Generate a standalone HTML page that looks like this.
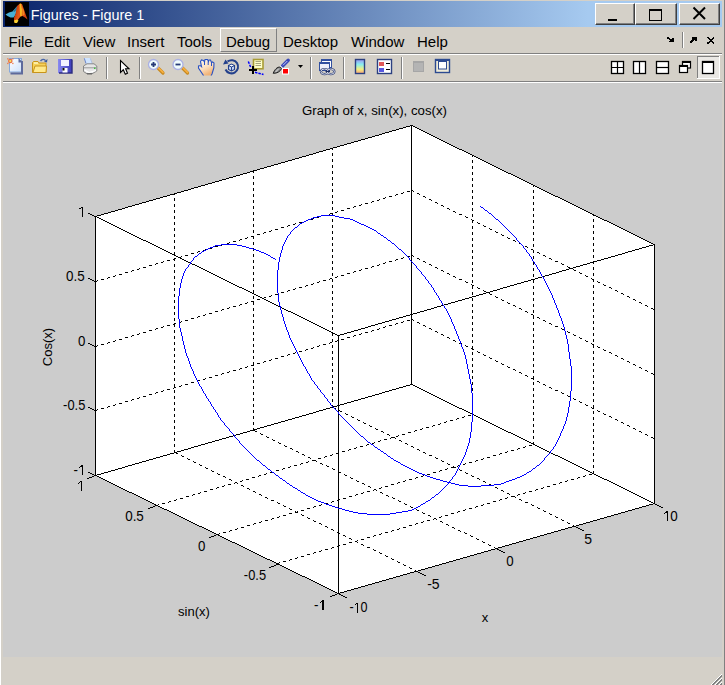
<!DOCTYPE html>
<html><head><meta charset="utf-8">
<style>
*{margin:0;padding:0;box-sizing:border-box}
html,body{width:725px;height:685px;overflow:hidden;background:#D4D0C8;font-family:"Liberation Sans",sans-serif;position:relative}
.abs{position:absolute}
#fl0{left:0;top:0;width:1px;height:685px;background:#FFFFFF}
#fl1{left:1px;top:0;width:1px;height:685px;background:#D4D0C8}
#fr1{left:723px;top:0;width:1px;height:685px;background:#D4D0C8}
#fr2{left:724px;top:0;width:1px;height:685px;background:#808080}
#title{left:3px;top:1px;width:719px;height:26px;background:linear-gradient(to right,#0A246A 0,#A6CAF0 585px,#A6CAF0 100%)}
#ttext{left:30.8px;top:6px;color:#fff;font-size:14.4px;white-space:nowrap;line-height:18px}
.cbtn{top:3px;height:22px;background:#D4D0C8;border-top:1px solid #fff;border-left:1px solid #fff;border-right:1px solid #404040;border-bottom:1px solid #404040;box-shadow:inset -1px -1px 0 #808080}
#menu span{position:absolute;top:33px;font-size:15px;line-height:17px;color:#000;white-space:nowrap}
.sepd{height:1px;background:#808080}
.sepw{height:1px;background:#fff}
.vsep{top:57px;width:2px;height:22px;border-left:1px solid #808080;border-right:1px solid #fff}
#fig{left:3px;top:83px;width:719px;height:574px;background:#CCCCCC}
svg text{font-family:"Liberation Sans",sans-serif;font-size:13px;fill:#000}
svg text.t{font-size:14px}
</style></head><body>
<div class="abs" id="fl0"></div><div class="abs" id="fl1"></div>
<div class="abs" id="fr1"></div><div class="abs" id="fr2"></div>

<div class="abs" id="title"></div>
<div class="abs" style="left:5px;top:2px;width:24px;height:24px;background:#000">
<svg width="24" height="24" viewBox="0 0 24 24">
<defs><linearGradient id="gML" x1="0" y1="0" x2="1" y2="0.3"><stop offset="0" stop-color="#a82808"/><stop offset="0.5" stop-color="#e85a18"/><stop offset="1" stop-color="#d84010"/></linearGradient></defs>
<polygon points="0.5,12.5 4,10.5 7.5,9.5 10.5,6 12.5,4 12.5,8.5 10,13.5 8.5,15.5 5.5,15.5 2.5,14" fill="#48aed6"/><polygon points="8,9 12.5,4 12.5,7 9.5,10" fill="#2a7898"/>
<polygon points="12,4 15,1.5 17,2 19,7.5 20.5,12 22.5,17.5 20,15.5 17.5,14 15.5,14.5 12,19 10.5,21 9,19 9,15.5 10.5,12" fill="url(#gML)"/>
<polygon points="14.5,2 16,1.5 17,8 16.8,14 15.2,14.5 14.8,8" fill="#f6b820"/>
<polygon points="17,5 19,9 19.5,13 17.5,13.5" fill="#f08a20"/>
<polygon points="9,18.5 12,17.5 13.5,18.5 12,21 9.5,21" fill="#f8d030"/>
</svg></div>
<div class="abs" id="ttext">Figures - Figure 1</div>

<div class="abs cbtn" style="left:595px;width:40px"><div class="abs" style="left:12px;top:15px;width:9px;height:2px;background:#000"></div></div>
<div class="abs cbtn" style="left:635px;width:42px"><div class="abs" style="left:13px;top:5px;width:13px;height:12px;border:1px solid #000;border-top:2px solid #000"></div></div>
<div class="abs cbtn" style="left:679px;width:41px">
<svg class="abs" style="left:12px;top:2px" width="15" height="15" viewBox="0 0 15 15"><path d="M1.5,1.5 L13,13 M13,1.5 L1.5,13" stroke="#000" stroke-width="2" fill="none"/></svg></div>

<div id="menu">
<span style="left:8.5px">File</span>
<span style="left:44px">Edit</span>
<span style="left:83px">View</span>
<span style="left:127px">Insert</span>
<span style="left:177px">Tools</span>
<div class="abs" style="left:220px;top:28px;width:57px;height:24px;border-top:1px solid #fff;border-left:1px solid #fff;border-right:1px solid #808080;border-bottom:1px solid #808080"></div>
<span style="left:226px">Debug</span>
<span style="left:283px">Desktop</span>
<span style="left:351px">Window</span>
<span style="left:417px">Help</span>
</div>
<!-- mdi icons right of menu -->
<svg class="abs" style="left:655px;top:28px" width="70" height="27" viewBox="655 28 70 27" shape-rendering="crispEdges">
<path d="M667.5,37.5 L672,41" stroke="#000" stroke-width="1.8" fill="none"/>
<path d="M669,41.3 L674,41.3 M673.2,37.5 L673.2,41.5" stroke="#000" stroke-width="1.6" fill="none"/>
<rect x="682" y="32" width="1" height="16" fill="#808080"/><rect x="683" y="32" width="1" height="16" fill="#fff"/>
<path d="M690.5,42.5 L695,38.5" stroke="#000" stroke-width="1.8" fill="none"/>
<path d="M692,38 L696.5,38 M695.8,37.5 L695.8,41" stroke="#000" stroke-width="1.6" fill="none"/>
<path d="M707.5,37.5 L714.5,43.5 M714.5,37.5 L707.5,43.5" stroke="#000" stroke-width="1.5" fill="none"/>
</svg>

<div class="abs sepd" style="left:3px;top:53px;width:719px"></div>
<div class="abs sepw" style="left:3px;top:54px;width:719px"></div>

<!-- toolbar -->
<svg class="abs" style="left:0;top:0" width="725" height="83" viewBox="0 0 725 83">
<defs>
<linearGradient id="gPage" x1="0" y1="0" x2="1" y2="1"><stop offset="0" stop-color="#ffffff"/><stop offset="1" stop-color="#cfe2fb"/></linearGradient>
<linearGradient id="gFold" x1="0" y1="0" x2="0" y2="1"><stop offset="0" stop-color="#fff2a8"/><stop offset="1" stop-color="#f3c94a"/></linearGradient>
<linearGradient id="gFloppy" x1="0" y1="0" x2="1" y2="0"><stop offset="0" stop-color="#8a8af0"/><stop offset="1" stop-color="#3a3ab8"/></linearGradient>
<linearGradient id="gHand" x1="0" y1="0" x2="0.5" y2="1"><stop offset="0" stop-color="#fffaf0"/><stop offset="0.55" stop-color="#fde2c4"/><stop offset="1" stop-color="#f0b276"/></linearGradient>
<linearGradient id="gCbar" x1="0" y1="0" x2="0" y2="1"><stop offset="0" stop-color="#9c94f4"/><stop offset="0.35" stop-color="#88eef0"/><stop offset="0.7" stop-color="#f4f080"/><stop offset="1" stop-color="#f8a078"/></linearGradient>
<linearGradient id="gPrint" x1="0" y1="0" x2="0" y2="1"><stop offset="0" stop-color="#e8e8e8"/><stop offset="1" stop-color="#909090"/></linearGradient>
</defs>
<!-- new file -->
<rect x="9.5" y="58.5" width="12" height="13.5" fill="url(#gPage)" stroke="#86a8dc" stroke-width="1"/>
<path d="M22,61 L22,73.5 L10.5,73.5" stroke="#5e6a9c" stroke-width="2" fill="none"/>
<polygon points="18.5,58 23,62.5 18.5,62.5" fill="#5e6a9c"/>
<circle cx="10.3" cy="61" r="2.3" fill="#ec7040"/>
<circle cx="10.3" cy="61" r="1.1" fill="#f2ea6a"/>
<rect x="7.2" y="58.2" width="1.3" height="1.3" fill="#ec7848"/><rect x="12.2" y="58.2" width="1.3" height="1.3" fill="#ec7848"/>
<rect x="7.2" y="62.8" width="1.3" height="1.3" fill="#ec7848"/><rect x="12.2" y="62.8" width="1.3" height="1.3" fill="#ec7848"/>
<!-- open folder -->
<path d="M32.5,72.5 L32.5,62.5 L33.5,61.5 L38,61.5 L39,63 L46,63 L46,72.5 Z" fill="#f6d25a" stroke="#c8941a" stroke-width="1"/>
<path d="M33,72.5 L35,66 L46.5,66 L46,72.5 Z" fill="#ffe98a" stroke="#c8941a" stroke-width="1"/>
<path d="M34,63 L38,63" stroke="#fff6c0" stroke-width="1.5"/>
<path d="M40.5,61 Q43,58 45.5,60.5" stroke="#4a68a8" stroke-width="1.4" fill="none"/>
<polygon points="44,61.5 47.5,59 47,62.5" fill="#3c5a9c"/>
<!-- save -->
<rect x="58" y="59" width="14" height="14" fill="url(#gFloppy)"/>
<path d="M72,59.5 L72,73 L59,73" stroke="#2c2c80" stroke-width="1.4" fill="none"/>
<rect x="61" y="60" width="8" height="6" fill="#f4f4ff"/>
<rect x="62.5" y="68" width="5" height="4.5" fill="#ffffff"/>
<rect x="62.5" y="68" width="2" height="2.5" fill="#101010"/>
<!-- print -->
<polygon points="84,58 90.5,58 92.5,64 86,64" fill="#cfe4ff"/>
<path d="M84.3,58.3 L86,63.5" stroke="#6a84c8" stroke-width="1"/>
<path d="M90.3,58.3 L92.2,63.5" stroke="#a8b8d8" stroke-width="0.8"/>
<path d="M83.5,66 L87,63.8 L94,63.8 L96.8,66 L96.8,71 L92,73.8 L87,73.8 L83.5,71.5 Z" fill="#e6e6e6" stroke="#7c7c7c" stroke-width="0.9"/>
<path d="M84,67.8 L96.3,67.8" stroke="#9a9a9a" stroke-width="1"/>
<path d="M84.5,70 L89,72.5 L96,70.5" stroke="#ffffff" stroke-width="1.2" fill="none"/>
<path d="M87,73.8 L92,73.8" stroke="#505050" stroke-width="1"/>
<rect x="94" y="67.5" width="1.5" height="1.5" fill="#40c040"/>
<!-- separators -->
<rect x="106" y="57" width="1" height="22" fill="#808080"/><rect x="107" y="57" width="1" height="22" fill="#fff"/>
<rect x="139" y="57" width="1" height="22" fill="#808080"/><rect x="140" y="57" width="1" height="22" fill="#fff"/>
<rect x="310" y="57" width="1" height="22" fill="#808080"/><rect x="311" y="57" width="1" height="22" fill="#fff"/>
<rect x="343" y="57" width="1" height="22" fill="#808080"/><rect x="344" y="57" width="1" height="22" fill="#fff"/>
<rect x="401" y="57" width="1" height="22" fill="#808080"/><rect x="402" y="57" width="1" height="22" fill="#fff"/>
<!-- arrow -->
<path d="M120.5,60.5 L120.5,72.5 L123.3,69.8 L125.3,74.3 L127.5,73.3 L125.6,68.8 L129,68.8 Z" fill="#fff" stroke="#000" stroke-width="1.1" stroke-linejoin="miter"/>
<!-- zoom in -->
<path d="M158,68 L163,73" stroke="#c88a20" stroke-width="3.2" stroke-linecap="round"/>
<path d="M158.3,67.7 L163,72.4" stroke="#f8b040" stroke-width="1.6" stroke-linecap="round"/>
<circle cx="153.5" cy="64.5" r="5" fill="#f0fcfc" stroke="#aab0e4" stroke-width="1.3"/>
<path d="M151,64.5 L156,64.5 M153.5,62 L153.5,67" stroke="#263a78" stroke-width="1.8"/>
<!-- zoom out -->
<path d="M182.5,68 L187.5,73" stroke="#c88a20" stroke-width="3.2" stroke-linecap="round"/>
<path d="M182.8,67.7 L187.5,72.4" stroke="#f8b040" stroke-width="1.6" stroke-linecap="round"/>
<circle cx="178" cy="64.5" r="5" fill="#f0fcfc" stroke="#aab0e4" stroke-width="1.3"/>
<path d="M175.5,64.5 L180.5,64.5" stroke="#263a78" stroke-width="1.8"/>
<!-- hand -->
<path d="M203.5,75.5 L198.5,68 L198.5,66 L200.5,65.5 L201.5,66.5 L200.5,61.5 L201.5,60 L203.5,60.5 L204.5,62 L205,59.5 L207.5,59.5 L208.5,61.5 L209,60 L210.5,60 L211.5,62.5 L212.5,62 L214,63 L213.8,68 L212,74 L211,75.5 Z" fill="url(#gHand)"/>
<path d="M203.5,75.5 L198.5,68 L198.5,66 L200.5,65.5 L201.5,66.5 L200.5,61.5 L201.5,60 L203.5,60.5 L204.5,62 L205,59.5 L207.5,59.5 L208.5,61.5 L209,60 L210.5,60 L211.5,62.5 L212.5,62 L214,63 L213.8,68 L212,74 L211,75.5" fill="none" stroke="#2a52c4" stroke-width="1.1"/>
<path d="M204.5,62 L204.5,65 M208.2,61.5 L208.2,65 M211.5,62.5 L211.5,66" stroke="#2a52c4" stroke-width="1"/>
<!-- rotate -->
<path d="M225.5,69.5 A6.6,6.6 0 1 0 227.5,61.5" stroke="#24418c" stroke-width="2" fill="none"/>
<polygon points="223,64.5 225.5,59.5 228.5,63.5" fill="#24418c"/>
<polygon points="228.5,65.5 231.5,64 234.5,65.5 234.5,69.5 231.5,71 228.5,69.5" fill="#c4d4f4" stroke="#24418c" stroke-width="1.1"/>
<polygon points="229.5,65.6 231.5,64.8 233.5,65.6 231.5,66.5" fill="#ffffff"/>
<path d="M228.5,65.5 L231.5,67 L234.5,65.5 M231.5,67 L231.5,71" stroke="#24418c" stroke-width="1" fill="none"/>
<!-- data cursor -->
<rect x="253.5" y="59.5" width="9.5" height="9.3" fill="#ffffc8" stroke="#a89c34" stroke-width="1.6"/>
<path d="M255.5,61.5 L261,61.5 M255.5,63.5 L261,63.5 M255.5,65.5 L261,65.5" stroke="#a8a47a" stroke-width="1"/>
<path d="M249,70 L257,70 M253,66 L253,74" stroke="#000" stroke-width="2"/>
<path d="M248.3,61.5 L250.8,67.5" stroke="#0000ff" stroke-width="1.5" stroke-dasharray="2.5,1"/>
<path d="M255,72.3 L263.5,74.5" stroke="#0000ff" stroke-width="1.5" stroke-dasharray="2.5,1"/>
<!-- brush -->
<path d="M282,66.5 L288.2,60.3" stroke="#3a48b8" stroke-width="3.4" stroke-linecap="round"/>
<path d="M283,65.3 L287.3,61" stroke="#d0d8ff" stroke-width="0.9"/>
<path d="M279.8,65.8 L282.6,68.6" stroke="#ffffff" stroke-width="1.6"/>
<path d="M280.3,67 C277,66.8 274.5,69.8 273.2,73.3 C276.6,73.6 280.3,71.6 281.6,68.6 Z" fill="#8a8a8a" stroke="#1e1e1e" stroke-width="1"/>
<path d="M278.8,68.6 L275.6,72" stroke="#e8e8e8" stroke-width="1"/>
<rect x="282" y="68" width="7" height="6.5" fill="#fff"/>
<rect x="283" y="69" width="5" height="4.5" fill="#ff0000"/>
<polygon points="298,65 303,65 300.5,68" fill="#000"/>
<!-- link -->
<rect x="321.5" y="59.5" width="10" height="8" fill="#fff" stroke="#3250a0" stroke-width="1"/>
<rect x="321" y="59" width="11" height="2" fill="#3250a0"/>
<rect x="319.5" y="62.5" width="10" height="8" fill="#eef0fa" stroke="#3250a0" stroke-width="1"/>
<rect x="319" y="62" width="11" height="2" fill="#3250a0"/>
<ellipse cx="324.5" cy="71.6" rx="3.6" ry="2.6" fill="none" stroke="#2a3a70" stroke-width="2.2"/>
<ellipse cx="330.8" cy="71.6" rx="3.6" ry="2.6" fill="none" stroke="#2a3a70" stroke-width="2.2"/>
<ellipse cx="324.5" cy="71.6" rx="3.6" ry="2.6" fill="none" stroke="#eef0f8" stroke-width="0.9"/>
<ellipse cx="330.8" cy="71.6" rx="3.6" ry="2.6" fill="none" stroke="#eef0f8" stroke-width="0.9"/>
<path d="M325.5,71.4 L330,71.4" stroke="#1e2c60" stroke-width="1.3"/>
<!-- colorbar -->
<rect x="355.5" y="59.5" width="9" height="14" fill="url(#gCbar)" stroke="#2c4080" stroke-width="1.4"/>
<!-- legend -->
<rect x="377.5" y="59.5" width="14" height="14" fill="#fff" stroke="#2c4080" stroke-width="1.4"/>
<rect x="379" y="62" width="5" height="4" fill="#e05858"/>
<rect x="379" y="68" width="5" height="4" fill="#5858e0"/>
<path d="M386,63.5 L390,63.5 M386,69.5 L390,69.5" stroke="#000" stroke-width="1.2"/>
<!-- hide plot tools -->
<rect x="413" y="61" width="11" height="11" fill="#a6a6a6"/>
<rect x="414" y="63" width="9" height="8" fill="#b4b4b4"/>
<!-- show plot tools -->
<rect x="435.5" y="59.5" width="14" height="13" fill="#f0ecd8" stroke="#2c4a90" stroke-width="1.4"/>
<rect x="435" y="59" width="15" height="2" fill="#2c4a90"/>
<rect x="438.5" y="61.5" width="8" height="7.5" fill="#fff" stroke="#2c4a90" stroke-width="1"/>
<!-- layout buttons -->
<rect x="611.5" y="61.5" width="12" height="12" fill="#fff" stroke="#000" stroke-width="1.3"/>
<path d="M617.5,61.5 L617.5,73.5 M611.5,67.5 L623.5,67.5" stroke="#000" stroke-width="1.2"/>
<rect x="633.5" y="61.5" width="12" height="12" fill="#fff" stroke="#000" stroke-width="1.3"/>
<path d="M639.5,61.5 L639.5,73.5" stroke="#000" stroke-width="1.2"/>
<rect x="656.5" y="61.5" width="12" height="12" fill="#fff" stroke="#000" stroke-width="1.3"/>
<path d="M656.5,67.5 L668.5,67.5" stroke="#000" stroke-width="1.2"/>
<rect x="682.5" y="61.5" width="8" height="6.5" fill="#fff" stroke="#000" stroke-width="1.2"/>
<rect x="682" y="61" width="9" height="2" fill="#000"/>
<rect x="679.5" y="65.5" width="8" height="7" fill="#fff" stroke="#000" stroke-width="1.2"/>
<rect x="679" y="65" width="9" height="2" fill="#000"/>
<!-- pressed button -->
<rect x="697" y="56" width="23" height="23" fill="#eae8e4"/>
<rect x="697" y="56" width="23" height="1" fill="#808080"/><rect x="697" y="56" width="1" height="23" fill="#808080"/>
<rect x="697" y="78" width="23" height="1" fill="#fff"/><rect x="719" y="56" width="1" height="23" fill="#fff"/>
<rect x="702.5" y="61.5" width="11" height="12" fill="#fff" stroke="#000" stroke-width="1.3"/>
<rect x="702" y="61" width="12" height="2" fill="#000"/>
</svg>


<div class="abs sepd" style="left:3px;top:81px;width:719px"></div>
<div class="abs sepw" style="left:3px;top:82px;width:719px"></div>

<div class="abs" id="fig"></div>
<svg class="abs" style="left:0;top:0" width="725" height="685" shape-rendering="crispEdges">
<polygon points="95.50,216.40 411.50,125.65 654.50,244.40 654.50,503.15 338.50,593.90 95.50,475.15" fill="#fff"/>
<path d="M332 148h1v1h-1zM332 149h1v1h-1zM332 153h1v1h-1zM332 154h1v1h-1zM332 155h1v1h-1zM472 155h1v1h-1zM472 156h1v1h-1zM332 159h1v1h-1zM332 160h1v1h-1zM472 160h1v1h-1zM332 161h1v1h-1zM472 161h1v1h-1zM472 162h1v1h-1zM332 165h1v1h-1zM332 166h1v1h-1zM472 166h1v1h-1zM332 167h1v1h-1zM472 167h1v1h-1zM472 168h1v1h-1zM253 171h1v1h-1zM332 171h1v1h-1zM253 172h1v1h-1zM332 172h1v1h-1zM472 172h1v1h-1zM332 173h1v1h-1zM472 173h1v1h-1zM472 174h1v1h-1zM253 176h1v1h-1zM253 177h1v1h-1zM332 177h1v1h-1zM253 178h1v1h-1zM332 178h1v1h-1zM472 178h1v1h-1zM332 179h1v1h-1zM472 179h1v1h-1zM472 180h1v1h-1zM253 182h1v1h-1zM253 183h1v1h-1zM332 183h1v1h-1zM253 184h1v1h-1zM332 184h1v1h-1zM472 184h1v1h-1zM332 185h1v1h-1zM472 185h1v1h-1zM533 185h1v1h-1zM472 186h1v1h-1zM533 186h1v1h-1zM253 188h1v1h-1zM253 189h1v1h-1zM332 189h1v1h-1zM253 190h1v1h-1zM332 190h1v1h-1zM411 190h2v1h-2zM472 190h1v1h-1zM533 190h1v1h-1zM332 191h1v1h-1zM407 191h3v1h-3zM413 191h1v1h-1zM472 191h1v1h-1zM533 191h1v1h-1zM403 192h1v1h-1zM472 192h1v1h-1zM533 192h1v1h-1zM174 193h1v1h-1zM401 193h2v1h-2zM417 193h2v1h-2zM174 194h1v1h-1zM253 194h1v1h-1zM396 194h2v1h-2zM419 194h1v1h-1zM253 195h1v1h-1zM332 195h1v1h-1zM395 195h1v1h-1zM253 196h1v1h-1zM332 196h1v1h-1zM389 196h3v1h-3zM423 196h2v1h-2zM472 196h1v1h-1zM533 196h1v1h-1zM332 197h1v1h-1zM385 197h1v1h-1zM425 197h1v1h-1zM472 197h1v1h-1zM533 197h1v1h-1zM174 198h1v1h-1zM383 198h2v1h-2zM472 198h1v1h-1zM533 198h1v1h-1zM174 199h1v1h-1zM379 199h1v1h-1zM429 199h2v1h-2zM174 200h1v1h-1zM253 200h1v1h-1zM377 200h2v1h-2zM431 200h1v1h-1zM253 201h1v1h-1zM332 201h1v1h-1zM372 201h2v1h-2zM253 202h1v1h-1zM332 202h1v1h-1zM371 202h1v1h-1zM435 202h2v1h-2zM472 202h1v1h-1zM533 202h1v1h-1zM332 203h1v1h-1zM365 203h3v1h-3zM437 203h1v1h-1zM472 203h1v1h-1zM533 203h1v1h-1zM174 204h1v1h-1zM361 204h1v1h-1zM472 204h1v1h-1zM533 204h1v1h-1zM174 205h1v1h-1zM359 205h2v1h-2zM441 205h2v1h-2zM174 206h1v1h-1zM253 206h1v1h-1zM354 206h2v1h-2zM443 206h1v1h-1zM253 207h1v1h-1zM332 207h1v1h-1zM353 207h1v1h-1zM253 208h1v1h-1zM332 208h1v1h-1zM347 208h3v1h-3zM447 208h2v1h-2zM472 208h1v1h-1zM533 208h1v1h-1zM332 209h1v1h-1zM449 209h1v1h-1zM472 209h1v1h-1zM533 209h1v1h-1zM174 210h1v1h-1zM341 210h3v1h-3zM472 210h1v1h-1zM533 210h1v1h-1zM174 211h1v1h-1zM337 211h1v1h-1zM453 211h2v1h-2zM174 212h1v1h-1zM253 212h1v1h-1zM335 212h2v1h-2zM455 212h1v1h-1zM253 213h1v1h-1zM330 213h3v1h-3zM253 214h1v1h-1zM329 214h1v1h-1zM332 214h1v1h-1zM459 214h3v1h-3zM472 214h1v1h-1zM533 214h1v1h-1zM593 214h1v1h-1zM323 215h3v1h-3zM332 215h1v1h-1zM472 215h1v1h-1zM533 215h1v1h-1zM593 215h1v1h-1zM174 216h1v1h-1zM319 216h1v1h-1zM465 216h1v1h-1zM472 216h1v1h-1zM533 216h1v1h-1zM174 217h1v1h-1zM317 217h2v1h-2zM466 217h2v1h-2zM174 218h1v1h-1zM253 218h1v1h-1zM313 218h1v1h-1zM253 219h1v1h-1zM311 219h2v1h-2zM332 219h1v1h-1zM471 219h1v1h-1zM593 219h1v1h-1zM253 220h1v1h-1zM306 220h2v1h-2zM332 220h1v1h-1zM472 220h2v1h-2zM533 220h1v1h-1zM593 220h1v1h-1zM305 221h1v1h-1zM332 221h1v1h-1zM472 221h1v1h-1zM533 221h1v1h-1zM593 221h1v1h-1zM174 222h1v1h-1zM299 222h3v1h-3zM472 222h1v1h-1zM477 222h1v1h-1zM533 222h1v1h-1zM174 223h1v1h-1zM295 223h1v1h-1zM478 223h2v1h-2zM174 224h1v1h-1zM253 224h1v1h-1zM293 224h2v1h-2zM253 225h1v1h-1zM288 225h2v1h-2zM332 225h1v1h-1zM483 225h1v1h-1zM593 225h1v1h-1zM253 226h1v1h-1zM287 226h1v1h-1zM332 226h1v1h-1zM472 226h1v1h-1zM484 226h2v1h-2zM533 226h1v1h-1zM593 226h1v1h-1zM281 227h3v1h-3zM332 227h1v1h-1zM472 227h1v1h-1zM533 227h1v1h-1zM593 227h1v1h-1zM174 228h1v1h-1zM472 228h1v1h-1zM489 228h1v1h-1zM533 228h1v1h-1zM174 229h1v1h-1zM275 229h3v1h-3zM490 229h2v1h-2zM174 230h1v1h-1zM253 230h1v1h-1zM271 230h1v1h-1zM253 231h1v1h-1zM269 231h2v1h-2zM332 231h1v1h-1zM495 231h1v1h-1zM593 231h1v1h-1zM253 232h1v1h-1zM264 232h2v1h-2zM332 232h1v1h-1zM472 232h1v1h-1zM496 232h2v1h-2zM533 232h1v1h-1zM593 232h1v1h-1zM263 233h1v1h-1zM332 233h1v1h-1zM472 233h1v1h-1zM533 233h1v1h-1zM593 233h1v1h-1zM174 234h1v1h-1zM257 234h3v1h-3zM472 234h1v1h-1zM501 234h1v1h-1zM533 234h1v1h-1zM174 235h1v1h-1zM502 235h2v1h-2zM174 236h1v1h-1zM251 236h3v1h-3zM247 237h1v1h-1zM253 237h1v1h-1zM332 237h1v1h-1zM507 237h1v1h-1zM593 237h1v1h-1zM245 238h2v1h-2zM253 238h1v1h-1zM332 238h1v1h-1zM472 238h1v1h-1zM508 238h2v1h-2zM533 238h1v1h-1zM593 238h1v1h-1zM240 239h2v1h-2zM332 239h1v1h-1zM472 239h1v1h-1zM533 239h1v1h-1zM593 239h1v1h-1zM174 240h1v1h-1zM239 240h1v1h-1zM472 240h1v1h-1zM513 240h2v1h-2zM533 240h1v1h-1zM174 241h1v1h-1zM233 241h3v1h-3zM515 241h1v1h-1zM174 242h1v1h-1zM229 242h1v1h-1zM253 242h1v1h-1zM227 243h2v1h-2zM253 243h1v1h-1zM332 243h1v1h-1zM519 243h2v1h-2zM593 243h1v1h-1zM222 244h2v1h-2zM253 244h1v1h-1zM332 244h1v1h-1zM472 244h1v1h-1zM521 244h1v1h-1zM533 244h1v1h-1zM593 244h1v1h-1zM221 245h1v1h-1zM332 245h1v1h-1zM472 245h1v1h-1zM533 245h1v1h-1zM593 245h1v1h-1zM174 246h1v1h-1zM215 246h3v1h-3zM472 246h1v1h-1zM525 246h2v1h-2zM533 246h1v1h-1zM174 247h1v1h-1zM527 247h1v1h-1zM174 248h1v1h-1zM209 248h3v1h-3zM253 248h1v1h-1zM205 249h1v1h-1zM253 249h1v1h-1zM332 249h1v1h-1zM531 249h2v1h-2zM593 249h1v1h-1zM203 250h2v1h-2zM253 250h1v1h-1zM332 250h1v1h-1zM472 250h1v1h-1zM533 250h1v1h-1zM593 250h1v1h-1zM198 251h2v1h-2zM332 251h1v1h-1zM472 251h1v1h-1zM533 251h1v1h-1zM593 251h1v1h-1zM174 252h1v1h-1zM197 252h1v1h-1zM472 252h1v1h-1zM533 252h1v1h-1zM537 252h2v1h-2zM174 253h1v1h-1zM191 253h3v1h-3zM539 253h1v1h-1zM174 254h1v1h-1zM253 254h1v1h-1zM185 255h3v1h-3zM253 255h1v1h-1zM332 255h1v1h-1zM411 255h2v1h-2zM543 255h2v1h-2zM593 255h1v1h-1zM181 256h1v1h-1zM253 256h1v1h-1zM332 256h1v1h-1zM407 256h3v1h-3zM413 256h1v1h-1zM472 256h1v1h-1zM533 256h1v1h-1zM545 256h1v1h-1zM593 256h1v1h-1zM179 257h2v1h-2zM332 257h1v1h-1zM403 257h1v1h-1zM472 257h1v1h-1zM533 257h1v1h-1zM593 257h1v1h-1zM174 258h2v1h-2zM401 258h2v1h-2zM417 258h2v1h-2zM472 258h1v1h-1zM533 258h1v1h-1zM549 258h2v1h-2zM173 259h2v1h-2zM396 259h2v1h-2zM419 259h1v1h-1zM551 259h1v1h-1zM167 260h3v1h-3zM174 260h1v1h-1zM253 260h1v1h-1zM395 260h1v1h-1zM163 261h1v1h-1zM253 261h1v1h-1zM332 261h1v1h-1zM389 261h3v1h-3zM423 261h2v1h-2zM555 261h3v1h-3zM593 261h1v1h-1zM161 262h2v1h-2zM253 262h1v1h-1zM332 262h1v1h-1zM385 262h1v1h-1zM425 262h1v1h-1zM472 262h1v1h-1zM533 262h1v1h-1zM593 262h1v1h-1zM156 263h2v1h-2zM332 263h1v1h-1zM383 263h2v1h-2zM472 263h1v1h-1zM533 263h1v1h-1zM561 263h1v1h-1zM593 263h1v1h-1zM155 264h1v1h-1zM174 264h1v1h-1zM379 264h1v1h-1zM429 264h2v1h-2zM472 264h1v1h-1zM533 264h1v1h-1zM562 264h2v1h-2zM149 265h3v1h-3zM174 265h1v1h-1zM377 265h2v1h-2zM431 265h1v1h-1zM174 266h1v1h-1zM253 266h1v1h-1zM372 266h2v1h-2zM567 266h1v1h-1zM143 267h3v1h-3zM253 267h1v1h-1zM332 267h1v1h-1zM371 267h1v1h-1zM435 267h2v1h-2zM568 267h2v1h-2zM593 267h1v1h-1zM139 268h1v1h-1zM253 268h1v1h-1zM332 268h1v1h-1zM365 268h3v1h-3zM437 268h1v1h-1zM472 268h1v1h-1zM533 268h1v1h-1zM593 268h1v1h-1zM137 269h2v1h-2zM332 269h1v1h-1zM361 269h1v1h-1zM472 269h1v1h-1zM533 269h1v1h-1zM573 269h1v1h-1zM593 269h1v1h-1zM132 270h2v1h-2zM174 270h1v1h-1zM359 270h2v1h-2zM441 270h2v1h-2zM472 270h1v1h-1zM533 270h1v1h-1zM574 270h2v1h-2zM131 271h1v1h-1zM174 271h1v1h-1zM354 271h2v1h-2zM443 271h1v1h-1zM125 272h3v1h-3zM174 272h1v1h-1zM253 272h1v1h-1zM353 272h1v1h-1zM579 272h1v1h-1zM253 273h1v1h-1zM332 273h1v1h-1zM347 273h3v1h-3zM447 273h2v1h-2zM580 273h2v1h-2zM593 273h1v1h-1zM119 274h3v1h-3zM253 274h1v1h-1zM332 274h1v1h-1zM449 274h1v1h-1zM472 274h1v1h-1zM533 274h1v1h-1zM593 274h1v1h-1zM115 275h1v1h-1zM332 275h1v1h-1zM341 275h3v1h-3zM472 275h1v1h-1zM533 275h1v1h-1zM585 275h1v1h-1zM593 275h1v1h-1zM113 276h2v1h-2zM174 276h1v1h-1zM337 276h1v1h-1zM453 276h2v1h-2zM472 276h1v1h-1zM533 276h1v1h-1zM586 276h2v1h-2zM108 277h2v1h-2zM174 277h1v1h-1zM335 277h2v1h-2zM455 277h1v1h-1zM107 278h1v1h-1zM174 278h1v1h-1zM253 278h1v1h-1zM330 278h2v1h-2zM591 278h1v1h-1zM101 279h3v1h-3zM253 279h1v1h-1zM329 279h1v1h-1zM332 279h1v1h-1zM459 279h3v1h-3zM592 279h2v1h-2zM97 280h1v1h-1zM253 280h1v1h-1zM323 280h3v1h-3zM332 280h1v1h-1zM472 280h1v1h-1zM533 280h1v1h-1zM593 280h1v1h-1zM95 281h2v1h-2zM319 281h1v1h-1zM332 281h1v1h-1zM465 281h1v1h-1zM472 281h1v1h-1zM533 281h1v1h-1zM593 281h1v1h-1zM597 281h1v1h-1zM174 282h1v1h-1zM317 282h2v1h-2zM466 282h2v1h-2zM472 282h1v1h-1zM533 282h1v1h-1zM598 282h2v1h-2zM174 283h1v1h-1zM313 283h1v1h-1zM174 284h1v1h-1zM253 284h1v1h-1zM311 284h2v1h-2zM471 284h1v1h-1zM603 284h1v1h-1zM253 285h1v1h-1zM306 285h2v1h-2zM332 285h1v1h-1zM472 285h2v1h-2zM593 285h1v1h-1zM604 285h2v1h-2zM253 286h1v1h-1zM305 286h1v1h-1zM332 286h1v1h-1zM472 286h1v1h-1zM533 286h1v1h-1zM593 286h1v1h-1zM299 287h3v1h-3zM332 287h1v1h-1zM472 287h1v1h-1zM477 287h1v1h-1zM533 287h1v1h-1zM593 287h1v1h-1zM609 287h2v1h-2zM174 288h1v1h-1zM295 288h1v1h-1zM472 288h1v1h-1zM478 288h2v1h-2zM533 288h1v1h-1zM611 288h1v1h-1zM174 289h1v1h-1zM293 289h2v1h-2zM174 290h1v1h-1zM253 290h1v1h-1zM288 290h2v1h-2zM483 290h1v1h-1zM615 290h2v1h-2zM253 291h1v1h-1zM287 291h1v1h-1zM332 291h1v1h-1zM484 291h2v1h-2zM593 291h1v1h-1zM617 291h1v1h-1zM253 292h1v1h-1zM281 292h3v1h-3zM332 292h1v1h-1zM472 292h1v1h-1zM533 292h1v1h-1zM593 292h1v1h-1zM332 293h1v1h-1zM472 293h1v1h-1zM489 293h1v1h-1zM533 293h1v1h-1zM593 293h1v1h-1zM621 293h2v1h-2zM174 294h1v1h-1zM275 294h3v1h-3zM472 294h1v1h-1zM490 294h2v1h-2zM533 294h1v1h-1zM623 294h1v1h-1zM174 295h1v1h-1zM271 295h1v1h-1zM174 296h1v1h-1zM253 296h1v1h-1zM269 296h2v1h-2zM495 296h1v1h-1zM627 296h2v1h-2zM253 297h1v1h-1zM264 297h2v1h-2zM332 297h1v1h-1zM496 297h2v1h-2zM593 297h1v1h-1zM629 297h1v1h-1zM253 298h1v1h-1zM263 298h1v1h-1zM332 298h1v1h-1zM472 298h1v1h-1zM533 298h1v1h-1zM593 298h1v1h-1zM257 299h3v1h-3zM332 299h1v1h-1zM472 299h1v1h-1zM501 299h1v1h-1zM533 299h1v1h-1zM593 299h1v1h-1zM633 299h2v1h-2zM174 300h1v1h-1zM472 300h1v1h-1zM502 300h2v1h-2zM533 300h1v1h-1zM635 300h1v1h-1zM174 301h1v1h-1zM251 301h3v1h-3zM174 302h1v1h-1zM247 302h1v1h-1zM253 302h1v1h-1zM507 302h1v1h-1zM639 302h2v1h-2zM245 303h2v1h-2zM253 303h1v1h-1zM332 303h1v1h-1zM508 303h2v1h-2zM593 303h1v1h-1zM641 303h1v1h-1zM240 304h2v1h-2zM253 304h1v1h-1zM332 304h1v1h-1zM472 304h1v1h-1zM533 304h1v1h-1zM593 304h1v1h-1zM239 305h1v1h-1zM332 305h1v1h-1zM472 305h1v1h-1zM513 305h2v1h-2zM533 305h1v1h-1zM593 305h1v1h-1zM645 305h2v1h-2zM174 306h1v1h-1zM233 306h3v1h-3zM472 306h1v1h-1zM515 306h1v1h-1zM533 306h1v1h-1zM647 306h1v1h-1zM174 307h1v1h-1zM229 307h1v1h-1zM174 308h1v1h-1zM227 308h2v1h-2zM253 308h1v1h-1zM519 308h2v1h-2zM651 308h2v1h-2zM222 309h2v1h-2zM253 309h1v1h-1zM332 309h1v1h-1zM521 309h1v1h-1zM593 309h1v1h-1zM653 309h1v1h-1zM221 310h1v1h-1zM253 310h1v1h-1zM332 310h1v1h-1zM472 310h1v1h-1zM533 310h1v1h-1zM593 310h1v1h-1zM215 311h3v1h-3zM332 311h1v1h-1zM472 311h1v1h-1zM525 311h2v1h-2zM533 311h1v1h-1zM593 311h1v1h-1zM174 312h1v1h-1zM472 312h1v1h-1zM527 312h1v1h-1zM533 312h1v1h-1zM174 313h1v1h-1zM209 313h3v1h-3zM174 314h1v1h-1zM205 314h1v1h-1zM253 314h1v1h-1zM531 314h2v1h-2zM203 315h2v1h-2zM253 315h1v1h-1zM332 315h1v1h-1zM533 315h1v1h-1zM593 315h1v1h-1zM198 316h2v1h-2zM253 316h1v1h-1zM332 316h1v1h-1zM472 316h1v1h-1zM533 316h1v1h-1zM593 316h1v1h-1zM197 317h1v1h-1zM332 317h1v1h-1zM472 317h1v1h-1zM533 317h1v1h-1zM537 317h2v1h-2zM593 317h1v1h-1zM174 318h1v1h-1zM191 318h3v1h-3zM472 318h1v1h-1zM533 318h1v1h-1zM539 318h1v1h-1zM174 319h1v1h-1zM411 319h2v1h-2zM174 320h1v1h-1zM185 320h3v1h-3zM253 320h1v1h-1zM407 320h3v1h-3zM413 320h1v1h-1zM543 320h2v1h-2zM181 321h1v1h-1zM253 321h1v1h-1zM332 321h1v1h-1zM403 321h1v1h-1zM545 321h1v1h-1zM593 321h1v1h-1zM179 322h2v1h-2zM253 322h1v1h-1zM332 322h1v1h-1zM401 322h2v1h-2zM417 322h2v1h-2zM472 322h1v1h-1zM533 322h1v1h-1zM593 322h1v1h-1zM174 323h2v1h-2zM332 323h1v1h-1zM396 323h2v1h-2zM419 323h1v1h-1zM472 323h1v1h-1zM533 323h1v1h-1zM549 323h2v1h-2zM593 323h1v1h-1zM173 324h2v1h-2zM395 324h1v1h-1zM472 324h1v1h-1zM533 324h1v1h-1zM551 324h1v1h-1zM167 325h3v1h-3zM174 325h1v1h-1zM389 325h3v1h-3zM423 325h2v1h-2zM163 326h1v1h-1zM174 326h1v1h-1zM253 326h1v1h-1zM385 326h1v1h-1zM425 326h1v1h-1zM555 326h3v1h-3zM161 327h2v1h-2zM253 327h1v1h-1zM332 327h1v1h-1zM383 327h2v1h-2zM593 327h1v1h-1zM156 328h2v1h-2zM253 328h1v1h-1zM332 328h1v1h-1zM379 328h1v1h-1zM429 328h2v1h-2zM472 328h1v1h-1zM533 328h1v1h-1zM561 328h1v1h-1zM593 328h1v1h-1zM155 329h1v1h-1zM332 329h1v1h-1zM377 329h2v1h-2zM431 329h1v1h-1zM472 329h1v1h-1zM533 329h1v1h-1zM562 329h2v1h-2zM593 329h1v1h-1zM149 330h3v1h-3zM174 330h1v1h-1zM372 330h2v1h-2zM472 330h1v1h-1zM533 330h1v1h-1zM174 331h1v1h-1zM371 331h1v1h-1zM435 331h2v1h-2zM567 331h1v1h-1zM143 332h3v1h-3zM174 332h1v1h-1zM253 332h1v1h-1zM365 332h3v1h-3zM437 332h1v1h-1zM568 332h2v1h-2zM139 333h1v1h-1zM253 333h1v1h-1zM332 333h1v1h-1zM361 333h1v1h-1zM593 333h1v1h-1zM137 334h2v1h-2zM253 334h1v1h-1zM332 334h1v1h-1zM359 334h2v1h-2zM441 334h2v1h-2zM472 334h1v1h-1zM533 334h1v1h-1zM573 334h1v1h-1zM593 334h1v1h-1zM132 335h2v1h-2zM332 335h1v1h-1zM354 335h2v1h-2zM443 335h1v1h-1zM472 335h1v1h-1zM533 335h1v1h-1zM574 335h2v1h-2zM593 335h1v1h-1zM131 336h1v1h-1zM174 336h1v1h-1zM353 336h1v1h-1zM472 336h1v1h-1zM533 336h1v1h-1zM125 337h3v1h-3zM174 337h1v1h-1zM347 337h3v1h-3zM447 337h2v1h-2zM579 337h1v1h-1zM174 338h1v1h-1zM253 338h1v1h-1zM449 338h1v1h-1zM580 338h2v1h-2zM119 339h3v1h-3zM253 339h1v1h-1zM332 339h1v1h-1zM341 339h3v1h-3zM593 339h1v1h-1zM115 340h1v1h-1zM253 340h1v1h-1zM332 340h1v1h-1zM337 340h1v1h-1zM453 340h2v1h-2zM472 340h1v1h-1zM533 340h1v1h-1zM585 340h1v1h-1zM593 340h1v1h-1zM113 341h2v1h-2zM332 341h1v1h-1zM335 341h2v1h-2zM455 341h1v1h-1zM472 341h1v1h-1zM533 341h1v1h-1zM586 341h2v1h-2zM593 341h1v1h-1zM108 342h2v1h-2zM174 342h1v1h-1zM330 342h2v1h-2zM472 342h1v1h-1zM533 342h1v1h-1zM107 343h1v1h-1zM174 343h1v1h-1zM329 343h1v1h-1zM459 343h3v1h-3zM591 343h1v1h-1zM101 344h3v1h-3zM174 344h1v1h-1zM253 344h1v1h-1zM323 344h3v1h-3zM592 344h2v1h-2zM97 345h1v1h-1zM253 345h1v1h-1zM319 345h1v1h-1zM332 345h1v1h-1zM465 345h1v1h-1zM593 345h1v1h-1zM95 346h2v1h-2zM253 346h1v1h-1zM317 346h2v1h-2zM332 346h1v1h-1zM466 346h2v1h-2zM472 346h1v1h-1zM533 346h1v1h-1zM593 346h1v1h-1zM597 346h1v1h-1zM313 347h1v1h-1zM332 347h1v1h-1zM472 347h1v1h-1zM533 347h1v1h-1zM593 347h1v1h-1zM598 347h2v1h-2zM174 348h1v1h-1zM311 348h2v1h-2zM471 348h2v1h-2zM533 348h1v1h-1zM174 349h1v1h-1zM306 349h2v1h-2zM472 349h2v1h-2zM603 349h1v1h-1zM174 350h1v1h-1zM253 350h1v1h-1zM305 350h1v1h-1zM604 350h2v1h-2zM253 351h1v1h-1zM299 351h3v1h-3zM332 351h1v1h-1zM477 351h1v1h-1zM593 351h1v1h-1zM253 352h1v1h-1zM295 352h1v1h-1zM332 352h1v1h-1zM472 352h1v1h-1zM478 352h2v1h-2zM533 352h1v1h-1zM593 352h1v1h-1zM609 352h2v1h-2zM293 353h2v1h-2zM332 353h1v1h-1zM472 353h1v1h-1zM533 353h1v1h-1zM593 353h1v1h-1zM611 353h1v1h-1zM174 354h1v1h-1zM288 354h2v1h-2zM472 354h1v1h-1zM483 354h1v1h-1zM533 354h1v1h-1zM174 355h1v1h-1zM287 355h1v1h-1zM484 355h2v1h-2zM615 355h2v1h-2zM174 356h1v1h-1zM253 356h1v1h-1zM281 356h3v1h-3zM617 356h1v1h-1zM253 357h1v1h-1zM332 357h1v1h-1zM489 357h1v1h-1zM593 357h1v1h-1zM253 358h1v1h-1zM275 358h3v1h-3zM332 358h1v1h-1zM472 358h1v1h-1zM490 358h2v1h-2zM533 358h1v1h-1zM593 358h1v1h-1zM621 358h2v1h-2zM271 359h1v1h-1zM332 359h1v1h-1zM472 359h1v1h-1zM533 359h1v1h-1zM593 359h1v1h-1zM623 359h1v1h-1zM174 360h1v1h-1zM269 360h2v1h-2zM472 360h1v1h-1zM495 360h1v1h-1zM533 360h1v1h-1zM174 361h1v1h-1zM264 361h2v1h-2zM496 361h2v1h-2zM627 361h2v1h-2zM174 362h1v1h-1zM253 362h1v1h-1zM263 362h1v1h-1zM629 362h1v1h-1zM253 363h1v1h-1zM257 363h3v1h-3zM332 363h1v1h-1zM501 363h1v1h-1zM593 363h1v1h-1zM253 364h1v1h-1zM332 364h1v1h-1zM472 364h1v1h-1zM502 364h2v1h-2zM533 364h1v1h-1zM593 364h1v1h-1zM633 364h2v1h-2zM251 365h3v1h-3zM332 365h1v1h-1zM472 365h1v1h-1zM533 365h1v1h-1zM593 365h1v1h-1zM635 365h1v1h-1zM174 366h1v1h-1zM247 366h1v1h-1zM472 366h1v1h-1zM507 366h1v1h-1zM533 366h1v1h-1zM174 367h1v1h-1zM245 367h2v1h-2zM508 367h2v1h-2zM639 367h2v1h-2zM174 368h1v1h-1zM240 368h2v1h-2zM253 368h1v1h-1zM641 368h1v1h-1zM239 369h1v1h-1zM253 369h1v1h-1zM332 369h1v1h-1zM513 369h2v1h-2zM593 369h1v1h-1zM233 370h3v1h-3zM253 370h1v1h-1zM332 370h1v1h-1zM472 370h1v1h-1zM515 370h1v1h-1zM533 370h1v1h-1zM593 370h1v1h-1zM645 370h2v1h-2zM229 371h1v1h-1zM332 371h1v1h-1zM472 371h1v1h-1zM533 371h1v1h-1zM593 371h1v1h-1zM647 371h1v1h-1zM174 372h1v1h-1zM227 372h2v1h-2zM472 372h1v1h-1zM519 372h2v1h-2zM533 372h1v1h-1zM174 373h1v1h-1zM222 373h2v1h-2zM521 373h1v1h-1zM651 373h2v1h-2zM174 374h1v1h-1zM221 374h1v1h-1zM253 374h1v1h-1zM653 374h1v1h-1zM215 375h3v1h-3zM253 375h1v1h-1zM332 375h1v1h-1zM525 375h2v1h-2zM593 375h1v1h-1zM253 376h1v1h-1zM332 376h1v1h-1zM472 376h1v1h-1zM527 376h1v1h-1zM533 376h1v1h-1zM593 376h1v1h-1zM209 377h3v1h-3zM332 377h1v1h-1zM472 377h1v1h-1zM533 377h1v1h-1zM593 377h1v1h-1zM174 378h1v1h-1zM205 378h1v1h-1zM472 378h1v1h-1zM531 378h3v1h-3zM174 379h1v1h-1zM203 379h2v1h-2zM533 379h1v1h-1zM174 380h1v1h-1zM198 380h2v1h-2zM253 380h1v1h-1zM197 381h1v1h-1zM253 381h1v1h-1zM332 381h1v1h-1zM537 381h2v1h-2zM593 381h1v1h-1zM191 382h3v1h-3zM253 382h1v1h-1zM332 382h1v1h-1zM472 382h1v1h-1zM533 382h1v1h-1zM539 382h1v1h-1zM593 382h1v1h-1zM332 383h1v1h-1zM472 383h1v1h-1zM533 383h1v1h-1zM593 383h1v1h-1zM174 384h1v1h-1zM185 384h3v1h-3zM472 384h1v1h-1zM533 384h1v1h-1zM543 384h2v1h-2zM174 385h1v1h-1zM181 385h1v1h-1zM545 385h1v1h-1zM174 386h1v1h-1zM179 386h2v1h-2zM253 386h1v1h-1zM174 387h2v1h-2zM253 387h1v1h-1zM332 387h1v1h-1zM549 387h2v1h-2zM593 387h1v1h-1zM173 388h1v1h-1zM253 388h1v1h-1zM332 388h1v1h-1zM472 388h1v1h-1zM533 388h1v1h-1zM551 388h1v1h-1zM593 388h1v1h-1zM167 389h3v1h-3zM332 389h1v1h-1zM472 389h1v1h-1zM533 389h1v1h-1zM593 389h1v1h-1zM163 390h1v1h-1zM174 390h1v1h-1zM472 390h1v1h-1zM533 390h1v1h-1zM555 390h3v1h-3zM161 391h2v1h-2zM174 391h1v1h-1zM156 392h2v1h-2zM174 392h1v1h-1zM253 392h1v1h-1zM561 392h1v1h-1zM155 393h1v1h-1zM253 393h1v1h-1zM332 393h1v1h-1zM562 393h2v1h-2zM593 393h1v1h-1zM149 394h3v1h-3zM253 394h1v1h-1zM332 394h1v1h-1zM472 394h1v1h-1zM533 394h1v1h-1zM593 394h1v1h-1zM332 395h1v1h-1zM472 395h1v1h-1zM533 395h1v1h-1zM567 395h1v1h-1zM593 395h1v1h-1zM143 396h3v1h-3zM174 396h1v1h-1zM472 396h1v1h-1zM533 396h1v1h-1zM568 396h2v1h-2zM139 397h1v1h-1zM174 397h1v1h-1zM137 398h2v1h-2zM174 398h1v1h-1zM253 398h1v1h-1zM573 398h1v1h-1zM132 399h2v1h-2zM253 399h1v1h-1zM332 399h1v1h-1zM574 399h2v1h-2zM593 399h1v1h-1zM131 400h1v1h-1zM253 400h1v1h-1zM332 400h1v1h-1zM472 400h1v1h-1zM533 400h1v1h-1zM593 400h1v1h-1zM125 401h3v1h-3zM332 401h1v1h-1zM472 401h1v1h-1zM533 401h1v1h-1zM579 401h1v1h-1zM593 401h1v1h-1zM174 402h1v1h-1zM472 402h1v1h-1zM533 402h1v1h-1zM580 402h2v1h-2zM119 403h3v1h-3zM174 403h1v1h-1zM115 404h1v1h-1zM174 404h1v1h-1zM253 404h1v1h-1zM585 404h1v1h-1zM113 405h2v1h-2zM253 405h1v1h-1zM332 405h1v1h-1zM586 405h2v1h-2zM593 405h1v1h-1zM108 406h2v1h-2zM253 406h1v1h-1zM332 406h1v1h-1zM472 406h1v1h-1zM533 406h1v1h-1zM593 406h1v1h-1zM107 407h1v1h-1zM332 407h2v1h-2zM472 407h1v1h-1zM533 407h1v1h-1zM591 407h1v1h-1zM593 407h1v1h-1zM101 408h3v1h-3zM174 408h1v1h-1zM334 408h2v1h-2zM472 408h1v1h-1zM533 408h1v1h-1zM592 408h2v1h-2zM97 409h1v1h-1zM174 409h1v1h-1zM95 410h2v1h-2zM174 410h1v1h-1zM253 410h1v1h-1zM339 410h1v1h-1zM597 410h1v1h-1zM253 411h1v1h-1zM340 411h2v1h-2zM593 411h1v1h-1zM598 411h2v1h-2zM253 412h1v1h-1zM472 412h1v1h-1zM533 412h1v1h-1zM593 412h1v1h-1zM345 413h1v1h-1zM472 413h1v1h-1zM533 413h1v1h-1zM593 413h1v1h-1zM603 413h1v1h-1zM174 414h1v1h-1zM346 414h2v1h-2zM472 414h1v1h-1zM533 414h1v1h-1zM604 414h2v1h-2zM174 415h1v1h-1zM468 415h3v1h-3zM174 416h1v1h-1zM253 416h1v1h-1zM351 416h1v1h-1zM464 416h1v1h-1zM609 416h2v1h-2zM253 417h1v1h-1zM352 417h2v1h-2zM462 417h2v1h-2zM593 417h1v1h-1zM611 417h1v1h-1zM253 418h1v1h-1zM457 418h2v1h-2zM533 418h1v1h-1zM593 418h1v1h-1zM357 419h1v1h-1zM456 419h1v1h-1zM533 419h1v1h-1zM593 419h1v1h-1zM615 419h2v1h-2zM174 420h1v1h-1zM358 420h2v1h-2zM450 420h3v1h-3zM533 420h1v1h-1zM617 420h1v1h-1zM174 421h1v1h-1zM446 421h1v1h-1zM174 422h1v1h-1zM253 422h1v1h-1zM363 422h1v1h-1zM444 422h2v1h-2zM621 422h2v1h-2zM253 423h1v1h-1zM364 423h2v1h-2zM440 423h1v1h-1zM593 423h1v1h-1zM623 423h1v1h-1zM253 424h1v1h-1zM438 424h2v1h-2zM533 424h1v1h-1zM593 424h1v1h-1zM369 425h1v1h-1zM433 425h2v1h-2zM533 425h1v1h-1zM593 425h1v1h-1zM627 425h2v1h-2zM174 426h1v1h-1zM370 426h2v1h-2zM432 426h1v1h-1zM533 426h1v1h-1zM629 426h1v1h-1zM174 427h1v1h-1zM426 427h3v1h-3zM174 428h1v1h-1zM253 428h1v1h-1zM375 428h1v1h-1zM422 428h1v1h-1zM633 428h2v1h-2zM253 429h1v1h-1zM376 429h2v1h-2zM420 429h2v1h-2zM593 429h1v1h-1zM635 429h1v1h-1zM253 430h2v1h-2zM415 430h2v1h-2zM533 430h1v1h-1zM593 430h1v1h-1zM255 431h2v1h-2zM381 431h2v1h-2zM414 431h1v1h-1zM533 431h1v1h-1zM593 431h1v1h-1zM639 431h2v1h-2zM174 432h1v1h-1zM383 432h1v1h-1zM408 432h3v1h-3zM533 432h1v1h-1zM641 432h1v1h-1zM174 433h1v1h-1zM260 433h1v1h-1zM174 434h1v1h-1zM261 434h2v1h-2zM387 434h2v1h-2zM402 434h3v1h-3zM645 434h2v1h-2zM389 435h1v1h-1zM398 435h1v1h-1zM593 435h1v1h-1zM647 435h1v1h-1zM266 436h1v1h-1zM396 436h2v1h-2zM533 436h1v1h-1zM593 436h1v1h-1zM267 437h2v1h-2zM391 437h4v1h-4zM533 437h1v1h-1zM593 437h1v1h-1zM651 437h2v1h-2zM174 438h1v1h-1zM390 438h1v1h-1zM395 438h1v1h-1zM533 438h1v1h-1zM653 438h1v1h-1zM174 439h1v1h-1zM272 439h1v1h-1zM384 439h3v1h-3zM174 440h1v1h-1zM273 440h2v1h-2zM380 440h1v1h-1zM399 440h2v1h-2zM378 441h2v1h-2zM401 441h1v1h-1zM593 441h1v1h-1zM278 442h1v1h-1zM374 442h1v1h-1zM533 442h1v1h-1zM593 442h1v1h-1zM279 443h2v1h-2zM372 443h2v1h-2zM405 443h2v1h-2zM533 443h1v1h-1zM593 443h1v1h-1zM174 444h1v1h-1zM367 444h2v1h-2zM407 444h1v1h-1zM533 444h1v1h-1zM174 445h1v1h-1zM284 445h1v1h-1zM366 445h1v1h-1zM529 445h3v1h-3zM174 446h1v1h-1zM285 446h2v1h-2zM360 446h3v1h-3zM411 446h2v1h-2zM525 446h1v1h-1zM356 447h1v1h-1zM413 447h1v1h-1zM523 447h2v1h-2zM593 447h1v1h-1zM290 448h2v1h-2zM354 448h2v1h-2zM518 448h2v1h-2zM593 448h1v1h-1zM292 449h1v1h-1zM349 449h2v1h-2zM417 449h2v1h-2zM517 449h1v1h-1zM593 449h1v1h-1zM174 450h1v1h-1zM348 450h1v1h-1zM419 450h1v1h-1zM511 450h3v1h-3zM174 451h1v1h-1zM296 451h2v1h-2zM342 451h3v1h-3zM507 451h1v1h-1zM174 452h2v1h-2zM298 452h1v1h-1zM423 452h2v1h-2zM505 452h2v1h-2zM176 453h2v1h-2zM336 453h3v1h-3zM425 453h1v1h-1zM500 453h2v1h-2zM593 453h1v1h-1zM302 454h2v1h-2zM332 454h1v1h-1zM499 454h1v1h-1zM593 454h1v1h-1zM181 455h1v1h-1zM304 455h1v1h-1zM330 455h2v1h-2zM429 455h3v1h-3zM493 455h3v1h-3zM593 455h1v1h-1zM182 456h2v1h-2zM325 456h2v1h-2zM308 457h2v1h-2zM324 457h1v1h-1zM435 457h1v1h-1zM487 457h3v1h-3zM187 458h1v1h-1zM310 458h1v1h-1zM318 458h3v1h-3zM436 458h2v1h-2zM483 458h1v1h-1zM188 459h2v1h-2zM481 459h2v1h-2zM593 459h1v1h-1zM312 460h4v1h-4zM441 460h1v1h-1zM476 460h2v1h-2zM593 460h1v1h-1zM193 461h1v1h-1zM308 461h1v1h-1zM316 461h1v1h-1zM442 461h2v1h-2zM475 461h1v1h-1zM593 461h1v1h-1zM194 462h2v1h-2zM306 462h2v1h-2zM469 462h3v1h-3zM301 463h2v1h-2zM320 463h2v1h-2zM447 463h1v1h-1zM465 463h1v1h-1zM199 464h1v1h-1zM300 464h1v1h-1zM322 464h1v1h-1zM448 464h2v1h-2zM463 464h2v1h-2zM200 465h2v1h-2zM294 465h3v1h-3zM326 465h1v1h-1zM458 465h2v1h-2zM593 465h1v1h-1zM290 466h1v1h-1zM327 466h2v1h-2zM453 466h1v1h-1zM457 466h1v1h-1zM593 466h1v1h-1zM205 467h1v1h-1zM288 467h2v1h-2zM451 467h5v1h-5zM593 467h1v1h-1zM206 468h2v1h-2zM283 468h2v1h-2zM332 468h1v1h-1zM447 468h1v1h-1zM282 469h1v1h-1zM333 469h2v1h-2zM445 469h2v1h-2zM459 469h1v1h-1zM211 470h1v1h-1zM276 470h3v1h-3zM440 470h2v1h-2zM460 470h2v1h-2zM212 471h2v1h-2zM338 471h1v1h-1zM439 471h1v1h-1zM593 471h1v1h-1zM270 472h3v1h-3zM339 472h2v1h-2zM433 472h3v1h-3zM465 472h1v1h-1zM593 472h1v1h-1zM217 473h1v1h-1zM266 473h1v1h-1zM466 473h2v1h-2zM593 473h1v1h-1zM218 474h2v1h-2zM264 474h2v1h-2zM344 474h1v1h-1zM427 474h3v1h-3zM589 474h3v1h-3zM259 475h2v1h-2zM345 475h2v1h-2zM423 475h1v1h-1zM471 475h1v1h-1zM585 475h1v1h-1zM223 476h2v1h-2zM258 476h1v1h-1zM421 476h2v1h-2zM472 476h2v1h-2zM583 476h2v1h-2zM225 477h1v1h-1zM252 477h3v1h-3zM350 477h1v1h-1zM416 477h2v1h-2zM578 477h2v1h-2zM351 478h2v1h-2zM415 478h1v1h-1zM477 478h2v1h-2zM577 478h1v1h-1zM229 479h2v1h-2zM246 479h3v1h-3zM409 479h3v1h-3zM479 479h1v1h-1zM571 479h3v1h-3zM231 480h1v1h-1zM242 480h1v1h-1zM356 480h1v1h-1zM405 480h1v1h-1zM567 480h1v1h-1zM240 481h2v1h-2zM357 481h2v1h-2zM403 481h2v1h-2zM483 481h2v1h-2zM565 481h2v1h-2zM235 482h2v1h-2zM398 482h2v1h-2zM485 482h1v1h-1zM560 482h2v1h-2zM234 483h1v1h-1zM237 483h1v1h-1zM362 483h2v1h-2zM397 483h1v1h-1zM559 483h1v1h-1zM228 484h3v1h-3zM364 484h1v1h-1zM391 484h3v1h-3zM489 484h2v1h-2zM553 484h3v1h-3zM224 485h1v1h-1zM241 485h2v1h-2zM491 485h1v1h-1zM222 486h2v1h-2zM243 486h1v1h-1zM368 486h2v1h-2zM385 486h3v1h-3zM547 486h3v1h-3zM217 487h2v1h-2zM370 487h1v1h-1zM381 487h1v1h-1zM495 487h2v1h-2zM543 487h1v1h-1zM216 488h1v1h-1zM247 488h2v1h-2zM379 488h2v1h-2zM497 488h1v1h-1zM541 488h2v1h-2zM210 489h3v1h-3zM249 489h1v1h-1zM374 489h2v1h-2zM536 489h2v1h-2zM373 490h1v1h-1zM376 490h1v1h-1zM501 490h2v1h-2zM535 490h1v1h-1zM204 491h3v1h-3zM253 491h2v1h-2zM367 491h3v1h-3zM503 491h1v1h-1zM529 491h3v1h-3zM200 492h1v1h-1zM255 492h1v1h-1zM363 492h1v1h-1zM380 492h2v1h-2zM525 492h1v1h-1zM198 493h2v1h-2zM361 493h2v1h-2zM382 493h1v1h-1zM507 493h2v1h-2zM523 493h2v1h-2zM193 494h2v1h-2zM259 494h2v1h-2zM356 494h2v1h-2zM509 494h1v1h-1zM518 494h2v1h-2zM192 495h1v1h-1zM261 495h1v1h-1zM355 495h1v1h-1zM386 495h2v1h-2zM517 495h1v1h-1zM186 496h3v1h-3zM349 496h3v1h-3zM388 496h1v1h-1zM511 496h4v1h-4zM265 497h2v1h-2zM392 497h1v1h-1zM507 497h1v1h-1zM515 497h1v1h-1zM180 498h3v1h-3zM267 498h1v1h-1zM343 498h3v1h-3zM393 498h2v1h-2zM505 498h2v1h-2zM176 499h1v1h-1zM339 499h1v1h-1zM500 499h2v1h-2zM519 499h2v1h-2zM174 500h2v1h-2zM271 500h3v1h-3zM337 500h2v1h-2zM398 500h1v1h-1zM499 500h1v1h-1zM521 500h1v1h-1zM169 501h2v1h-2zM332 501h2v1h-2zM399 501h2v1h-2zM493 501h3v1h-3zM168 502h1v1h-1zM277 502h1v1h-1zM331 502h1v1h-1zM525 502h3v1h-3zM162 503h3v1h-3zM278 503h2v1h-2zM325 503h3v1h-3zM404 503h1v1h-1zM487 503h3v1h-3zM158 504h1v1h-1zM321 504h1v1h-1zM405 504h2v1h-2zM483 504h1v1h-1zM531 504h1v1h-1zM156 505h2v1h-2zM283 505h1v1h-1zM319 505h2v1h-2zM481 505h2v1h-2zM532 505h2v1h-2zM284 506h2v1h-2zM314 506h2v1h-2zM410 506h1v1h-1zM476 506h2v1h-2zM313 507h1v1h-1zM411 507h2v1h-2zM475 507h1v1h-1zM537 507h1v1h-1zM289 508h1v1h-1zM307 508h3v1h-3zM469 508h3v1h-3zM538 508h2v1h-2zM290 509h2v1h-2zM416 509h1v1h-1zM465 509h1v1h-1zM301 510h3v1h-3zM417 510h2v1h-2zM463 510h2v1h-2zM543 510h1v1h-1zM295 511h1v1h-1zM297 511h1v1h-1zM458 511h2v1h-2zM544 511h2v1h-2zM295 512h3v1h-3zM422 512h1v1h-1zM457 512h1v1h-1zM289 513h3v1h-3zM423 513h2v1h-2zM451 513h3v1h-3zM549 513h1v1h-1zM301 514h1v1h-1zM550 514h2v1h-2zM283 515h3v1h-3zM302 515h2v1h-2zM428 515h2v1h-2zM445 515h3v1h-3zM279 516h1v1h-1zM430 516h1v1h-1zM441 516h1v1h-1zM555 516h1v1h-1zM277 517h2v1h-2zM307 517h1v1h-1zM439 517h2v1h-2zM556 517h2v1h-2zM272 518h2v1h-2zM308 518h2v1h-2zM434 518h2v1h-2zM271 519h1v1h-1zM433 519h1v1h-1zM436 519h1v1h-1zM561 519h1v1h-1zM265 520h3v1h-3zM313 520h1v1h-1zM427 520h3v1h-3zM562 520h2v1h-2zM261 521h1v1h-1zM314 521h2v1h-2zM423 521h1v1h-1zM440 521h2v1h-2zM259 522h2v1h-2zM421 522h2v1h-2zM442 522h1v1h-1zM567 522h1v1h-1zM254 523h2v1h-2zM319 523h2v1h-2zM416 523h2v1h-2zM568 523h2v1h-2zM253 524h1v1h-1zM321 524h1v1h-1zM415 524h1v1h-1zM446 524h2v1h-2zM247 525h3v1h-3zM409 525h3v1h-3zM448 525h1v1h-1zM573 525h1v1h-1zM325 526h2v1h-2zM574 526h2v1h-2zM241 527h3v1h-3zM327 527h1v1h-1zM403 527h3v1h-3zM452 527h2v1h-2zM237 528h1v1h-1zM399 528h1v1h-1zM454 528h1v1h-1zM235 529h2v1h-2zM331 529h2v1h-2zM397 529h2v1h-2zM230 530h2v1h-2zM333 530h1v1h-1zM392 530h2v1h-2zM458 530h2v1h-2zM229 531h1v1h-1zM391 531h1v1h-1zM460 531h1v1h-1zM223 532h3v1h-3zM337 532h2v1h-2zM385 532h3v1h-3zM464 532h1v1h-1zM219 533h1v1h-1zM339 533h1v1h-1zM381 533h1v1h-1zM465 533h2v1h-2zM217 534h2v1h-2zM379 534h2v1h-2zM343 535h2v1h-2zM374 535h2v1h-2zM470 535h1v1h-1zM345 536h1v1h-1zM373 536h1v1h-1zM471 536h2v1h-2zM367 537h3v1h-3zM349 538h2v1h-2zM476 538h1v1h-1zM351 539h1v1h-1zM361 539h3v1h-3zM477 539h2v1h-2zM357 540h1v1h-1zM355 541h2v1h-2zM482 541h1v1h-1zM349 542h3v1h-3zM357 542h1v1h-1zM483 542h2v1h-2zM343 544h3v1h-3zM361 544h2v1h-2zM488 544h1v1h-1zM339 545h1v1h-1zM363 545h1v1h-1zM489 545h2v1h-2zM337 546h2v1h-2zM332 547h2v1h-2zM367 547h3v1h-3zM494 547h1v1h-1zM331 548h1v1h-1zM495 548h2v1h-2zM325 549h3v1h-3zM373 549h1v1h-1zM321 550h1v1h-1zM374 550h2v1h-2zM319 551h2v1h-2zM314 552h2v1h-2zM379 552h1v1h-1zM313 553h1v1h-1zM380 553h2v1h-2zM307 554h3v1h-3zM385 555h1v1h-1zM301 556h3v1h-3zM386 556h2v1h-2zM297 557h1v1h-1zM295 558h2v1h-2zM391 558h1v1h-1zM290 559h2v1h-2zM392 559h2v1h-2zM289 560h1v1h-1zM283 561h3v1h-3zM397 561h1v1h-1zM279 562h1v1h-1zM398 562h2v1h-2zM277 563h2v1h-2zM403 564h1v1h-1zM404 565h2v1h-2zM409 567h1v1h-1zM410 568h2v1h-2zM415 570h1v1h-1zM416 571h2v1h-2z" fill="#000"/>
<path d="M410 125h3v1h-3zM406 126h4v1h-4zM411 126h1v1h-1zM413 126h2v1h-2zM403 127h3v1h-3zM411 127h1v1h-1zM415 127h2v1h-2zM399 128h4v1h-4zM411 128h1v1h-1zM417 128h2v1h-2zM396 129h3v1h-3zM411 129h1v1h-1zM419 129h2v1h-2zM392 130h4v1h-4zM411 130h1v1h-1zM421 130h2v1h-2zM389 131h3v1h-3zM411 131h1v1h-1zM423 131h2v1h-2zM385 132h4v1h-4zM411 132h1v1h-1zM425 132h2v1h-2zM382 133h3v1h-3zM411 133h1v1h-1zM427 133h2v1h-2zM379 134h3v1h-3zM411 134h1v1h-1zM429 134h2v1h-2zM375 135h4v1h-4zM411 135h1v1h-1zM431 135h2v1h-2zM372 136h3v1h-3zM411 136h1v1h-1zM433 136h2v1h-2zM368 137h4v1h-4zM411 137h1v1h-1zM435 137h2v1h-2zM365 138h3v1h-3zM411 138h1v1h-1zM437 138h2v1h-2zM361 139h4v1h-4zM411 139h1v1h-1zM439 139h2v1h-2zM358 140h3v1h-3zM411 140h1v1h-1zM441 140h2v1h-2zM354 141h4v1h-4zM411 141h1v1h-1zM443 141h2v1h-2zM351 142h3v1h-3zM411 142h1v1h-1zM445 142h2v1h-2zM347 143h4v1h-4zM411 143h1v1h-1zM447 143h2v1h-2zM344 144h3v1h-3zM411 144h1v1h-1zM449 144h2v1h-2zM340 145h4v1h-4zM411 145h1v1h-1zM451 145h2v1h-2zM337 146h3v1h-3zM411 146h1v1h-1zM453 146h2v1h-2zM333 147h4v1h-4zM411 147h1v1h-1zM455 147h2v1h-2zM330 148h3v1h-3zM411 148h1v1h-1zM457 148h2v1h-2zM326 149h4v1h-4zM411 149h1v1h-1zM459 149h3v1h-3zM323 150h3v1h-3zM411 150h1v1h-1zM462 150h2v1h-2zM319 151h4v1h-4zM411 151h1v1h-1zM464 151h2v1h-2zM316 152h3v1h-3zM411 152h1v1h-1zM466 152h2v1h-2zM313 153h3v1h-3zM411 153h1v1h-1zM468 153h2v1h-2zM309 154h4v1h-4zM411 154h1v1h-1zM470 154h2v1h-2zM306 155h3v1h-3zM411 155h1v1h-1zM472 155h2v1h-2zM302 156h4v1h-4zM411 156h1v1h-1zM474 156h2v1h-2zM299 157h3v1h-3zM411 157h1v1h-1zM476 157h2v1h-2zM295 158h4v1h-4zM411 158h1v1h-1zM478 158h2v1h-2zM292 159h3v1h-3zM411 159h1v1h-1zM480 159h2v1h-2zM288 160h4v1h-4zM411 160h1v1h-1zM482 160h2v1h-2zM285 161h3v1h-3zM411 161h1v1h-1zM484 161h2v1h-2zM281 162h4v1h-4zM411 162h1v1h-1zM486 162h2v1h-2zM278 163h3v1h-3zM411 163h1v1h-1zM488 163h2v1h-2zM274 164h4v1h-4zM411 164h1v1h-1zM490 164h2v1h-2zM271 165h3v1h-3zM411 165h1v1h-1zM492 165h2v1h-2zM267 166h4v1h-4zM411 166h1v1h-1zM494 166h2v1h-2zM264 167h3v1h-3zM411 167h1v1h-1zM496 167h2v1h-2zM260 168h4v1h-4zM411 168h1v1h-1zM498 168h2v1h-2zM257 169h3v1h-3zM411 169h1v1h-1zM500 169h2v1h-2zM253 170h4v1h-4zM411 170h1v1h-1zM502 170h2v1h-2zM250 171h3v1h-3zM411 171h1v1h-1zM504 171h2v1h-2zM247 172h3v1h-3zM411 172h1v1h-1zM506 172h2v1h-2zM243 173h4v1h-4zM411 173h1v1h-1zM508 173h3v1h-3zM240 174h3v1h-3zM411 174h1v1h-1zM511 174h2v1h-2zM236 175h4v1h-4zM411 175h1v1h-1zM513 175h2v1h-2zM233 176h3v1h-3zM411 176h1v1h-1zM515 176h2v1h-2zM229 177h4v1h-4zM411 177h1v1h-1zM517 177h2v1h-2zM226 178h3v1h-3zM411 178h1v1h-1zM519 178h2v1h-2zM222 179h4v1h-4zM411 179h1v1h-1zM521 179h2v1h-2zM219 180h3v1h-3zM411 180h1v1h-1zM523 180h2v1h-2zM215 181h4v1h-4zM411 181h1v1h-1zM525 181h2v1h-2zM212 182h3v1h-3zM411 182h1v1h-1zM527 182h2v1h-2zM208 183h4v1h-4zM411 183h1v1h-1zM529 183h2v1h-2zM205 184h3v1h-3zM411 184h1v1h-1zM531 184h2v1h-2zM201 185h4v1h-4zM411 185h1v1h-1zM533 185h2v1h-2zM198 186h3v1h-3zM411 186h1v1h-1zM535 186h2v1h-2zM194 187h4v1h-4zM411 187h1v1h-1zM537 187h2v1h-2zM191 188h3v1h-3zM411 188h1v1h-1zM539 188h2v1h-2zM188 189h3v1h-3zM411 189h1v1h-1zM541 189h2v1h-2zM184 190h4v1h-4zM411 190h1v1h-1zM543 190h2v1h-2zM181 191h3v1h-3zM411 191h1v1h-1zM545 191h2v1h-2zM177 192h4v1h-4zM411 192h1v1h-1zM547 192h2v1h-2zM174 193h3v1h-3zM411 193h1v1h-1zM549 193h2v1h-2zM170 194h4v1h-4zM411 194h1v1h-1zM551 194h2v1h-2zM167 195h3v1h-3zM411 195h1v1h-1zM553 195h2v1h-2zM163 196h4v1h-4zM411 196h1v1h-1zM555 196h3v1h-3zM160 197h3v1h-3zM411 197h1v1h-1zM558 197h2v1h-2zM156 198h4v1h-4zM411 198h1v1h-1zM560 198h2v1h-2zM153 199h3v1h-3zM411 199h1v1h-1zM562 199h2v1h-2zM149 200h4v1h-4zM411 200h1v1h-1zM564 200h2v1h-2zM146 201h3v1h-3zM411 201h1v1h-1zM566 201h2v1h-2zM142 202h4v1h-4zM411 202h1v1h-1zM568 202h2v1h-2zM139 203h3v1h-3zM411 203h1v1h-1zM570 203h2v1h-2zM135 204h4v1h-4zM411 204h1v1h-1zM572 204h2v1h-2zM132 205h3v1h-3zM411 205h1v1h-1zM574 205h2v1h-2zM128 206h4v1h-4zM411 206h1v1h-1zM576 206h2v1h-2zM125 207h3v1h-3zM411 207h1v1h-1zM578 207h2v1h-2zM122 208h3v1h-3zM411 208h1v1h-1zM580 208h2v1h-2zM118 209h4v1h-4zM411 209h1v1h-1zM582 209h2v1h-2zM115 210h3v1h-3zM411 210h1v1h-1zM584 210h2v1h-2zM111 211h4v1h-4zM411 211h1v1h-1zM586 211h2v1h-2zM108 212h3v1h-3zM411 212h1v1h-1zM588 212h2v1h-2zM88 213h2v1h-2zM104 213h4v1h-4zM411 213h1v1h-1zM590 213h2v1h-2zM90 214h2v1h-2zM101 214h3v1h-3zM411 214h1v1h-1zM592 214h2v1h-2zM92 215h2v1h-2zM97 215h4v1h-4zM411 215h1v1h-1zM594 215h2v1h-2zM94 216h3v1h-3zM411 216h1v1h-1zM596 216h2v1h-2zM95 217h1v1h-1zM97 217h2v1h-2zM411 217h1v1h-1zM598 217h2v1h-2zM95 218h1v1h-1zM99 218h2v1h-2zM411 218h1v1h-1zM600 218h2v1h-2zM95 219h1v1h-1zM101 219h2v1h-2zM411 219h1v1h-1zM602 219h2v1h-2zM95 220h1v1h-1zM103 220h2v1h-2zM411 220h1v1h-1zM604 220h3v1h-3zM95 221h1v1h-1zM105 221h2v1h-2zM411 221h1v1h-1zM607 221h2v1h-2zM95 222h1v1h-1zM107 222h2v1h-2zM411 222h1v1h-1zM609 222h2v1h-2zM95 223h1v1h-1zM109 223h2v1h-2zM411 223h1v1h-1zM611 223h2v1h-2zM95 224h1v1h-1zM111 224h2v1h-2zM411 224h1v1h-1zM613 224h2v1h-2zM95 225h1v1h-1zM113 225h2v1h-2zM411 225h1v1h-1zM615 225h2v1h-2zM95 226h1v1h-1zM115 226h2v1h-2zM411 226h1v1h-1zM617 226h2v1h-2zM95 227h1v1h-1zM117 227h2v1h-2zM411 227h1v1h-1zM619 227h2v1h-2zM95 228h1v1h-1zM119 228h2v1h-2zM411 228h1v1h-1zM621 228h2v1h-2zM95 229h1v1h-1zM121 229h2v1h-2zM411 229h1v1h-1zM623 229h2v1h-2zM95 230h1v1h-1zM123 230h2v1h-2zM411 230h1v1h-1zM625 230h2v1h-2zM95 231h1v1h-1zM125 231h2v1h-2zM411 231h1v1h-1zM627 231h2v1h-2zM95 232h1v1h-1zM127 232h2v1h-2zM411 232h1v1h-1zM629 232h2v1h-2zM95 233h1v1h-1zM129 233h2v1h-2zM411 233h1v1h-1zM631 233h2v1h-2zM95 234h1v1h-1zM131 234h2v1h-2zM411 234h1v1h-1zM633 234h2v1h-2zM95 235h1v1h-1zM133 235h2v1h-2zM411 235h1v1h-1zM635 235h2v1h-2zM95 236h1v1h-1zM135 236h2v1h-2zM411 236h1v1h-1zM637 236h2v1h-2zM95 237h1v1h-1zM137 237h2v1h-2zM411 237h1v1h-1zM639 237h2v1h-2zM95 238h1v1h-1zM139 238h2v1h-2zM411 238h1v1h-1zM641 238h2v1h-2zM95 239h1v1h-1zM141 239h2v1h-2zM411 239h1v1h-1zM643 239h2v1h-2zM95 240h1v1h-1zM143 240h3v1h-3zM411 240h1v1h-1zM645 240h2v1h-2zM95 241h1v1h-1zM146 241h2v1h-2zM411 241h1v1h-1zM647 241h2v1h-2zM95 242h1v1h-1zM148 242h2v1h-2zM411 242h1v1h-1zM649 242h2v1h-2zM95 243h1v1h-1zM150 243h2v1h-2zM411 243h1v1h-1zM651 243h2v1h-2zM95 244h1v1h-1zM152 244h2v1h-2zM411 244h1v1h-1zM653 244h2v1h-2zM95 245h1v1h-1zM154 245h2v1h-2zM411 245h1v1h-1zM649 245h4v1h-4zM654 245h1v1h-1zM95 246h1v1h-1zM156 246h2v1h-2zM411 246h1v1h-1zM646 246h3v1h-3zM654 246h1v1h-1zM95 247h1v1h-1zM158 247h2v1h-2zM411 247h1v1h-1zM642 247h4v1h-4zM654 247h1v1h-1zM95 248h1v1h-1zM160 248h2v1h-2zM411 248h1v1h-1zM639 248h3v1h-3zM654 248h1v1h-1zM95 249h1v1h-1zM162 249h2v1h-2zM411 249h1v1h-1zM635 249h4v1h-4zM654 249h1v1h-1zM95 250h1v1h-1zM164 250h2v1h-2zM411 250h1v1h-1zM632 250h3v1h-3zM654 250h1v1h-1zM95 251h1v1h-1zM166 251h2v1h-2zM411 251h1v1h-1zM628 251h4v1h-4zM654 251h1v1h-1zM95 252h1v1h-1zM168 252h2v1h-2zM411 252h1v1h-1zM625 252h3v1h-3zM654 252h1v1h-1zM95 253h1v1h-1zM170 253h2v1h-2zM411 253h1v1h-1zM622 253h3v1h-3zM654 253h1v1h-1zM95 254h1v1h-1zM172 254h2v1h-2zM411 254h1v1h-1zM618 254h4v1h-4zM654 254h1v1h-1zM95 255h1v1h-1zM174 255h2v1h-2zM411 255h1v1h-1zM615 255h3v1h-3zM654 255h1v1h-1zM95 256h1v1h-1zM176 256h2v1h-2zM411 256h1v1h-1zM611 256h4v1h-4zM654 256h1v1h-1zM95 257h1v1h-1zM178 257h2v1h-2zM411 257h1v1h-1zM608 257h3v1h-3zM654 257h1v1h-1zM95 258h1v1h-1zM180 258h2v1h-2zM411 258h1v1h-1zM604 258h4v1h-4zM654 258h1v1h-1zM95 259h1v1h-1zM182 259h2v1h-2zM411 259h1v1h-1zM601 259h3v1h-3zM654 259h1v1h-1zM95 260h1v1h-1zM184 260h2v1h-2zM411 260h1v1h-1zM597 260h4v1h-4zM654 260h1v1h-1zM95 261h1v1h-1zM186 261h2v1h-2zM411 261h1v1h-1zM594 261h3v1h-3zM654 261h1v1h-1zM95 262h1v1h-1zM188 262h2v1h-2zM411 262h1v1h-1zM590 262h4v1h-4zM654 262h1v1h-1zM95 263h1v1h-1zM190 263h2v1h-2zM411 263h1v1h-1zM587 263h3v1h-3zM654 263h1v1h-1zM95 264h1v1h-1zM192 264h3v1h-3zM411 264h1v1h-1zM583 264h4v1h-4zM654 264h1v1h-1zM95 265h1v1h-1zM195 265h2v1h-2zM411 265h1v1h-1zM580 265h3v1h-3zM654 265h1v1h-1zM95 266h1v1h-1zM197 266h2v1h-2zM411 266h1v1h-1zM576 266h4v1h-4zM654 266h1v1h-1zM95 267h1v1h-1zM199 267h2v1h-2zM411 267h1v1h-1zM573 267h3v1h-3zM654 267h1v1h-1zM95 268h1v1h-1zM201 268h2v1h-2zM411 268h1v1h-1zM569 268h4v1h-4zM654 268h1v1h-1zM95 269h1v1h-1zM203 269h2v1h-2zM411 269h1v1h-1zM566 269h3v1h-3zM654 269h1v1h-1zM95 270h1v1h-1zM205 270h2v1h-2zM411 270h1v1h-1zM562 270h4v1h-4zM654 270h1v1h-1zM95 271h1v1h-1zM207 271h2v1h-2zM411 271h1v1h-1zM559 271h3v1h-3zM654 271h1v1h-1zM95 272h1v1h-1zM209 272h2v1h-2zM411 272h1v1h-1zM556 272h3v1h-3zM654 272h1v1h-1zM95 273h1v1h-1zM211 273h2v1h-2zM411 273h1v1h-1zM552 273h4v1h-4zM654 273h1v1h-1zM95 274h1v1h-1zM213 274h2v1h-2zM411 274h1v1h-1zM549 274h3v1h-3zM654 274h1v1h-1zM95 275h1v1h-1zM215 275h2v1h-2zM411 275h1v1h-1zM545 275h4v1h-4zM654 275h1v1h-1zM95 276h1v1h-1zM217 276h2v1h-2zM411 276h1v1h-1zM542 276h3v1h-3zM654 276h1v1h-1zM95 277h1v1h-1zM219 277h2v1h-2zM411 277h1v1h-1zM538 277h4v1h-4zM654 277h1v1h-1zM88 278h2v1h-2zM95 278h1v1h-1zM221 278h2v1h-2zM411 278h1v1h-1zM535 278h3v1h-3zM654 278h1v1h-1zM90 279h2v1h-2zM95 279h1v1h-1zM223 279h2v1h-2zM411 279h1v1h-1zM531 279h4v1h-4zM654 279h1v1h-1zM92 280h2v1h-2zM95 280h1v1h-1zM225 280h2v1h-2zM411 280h1v1h-1zM528 280h3v1h-3zM654 280h1v1h-1zM94 281h2v1h-2zM227 281h2v1h-2zM411 281h1v1h-1zM524 281h4v1h-4zM654 281h1v1h-1zM95 282h1v1h-1zM229 282h2v1h-2zM411 282h1v1h-1zM521 282h3v1h-3zM654 282h1v1h-1zM95 283h1v1h-1zM231 283h2v1h-2zM411 283h1v1h-1zM517 283h4v1h-4zM654 283h1v1h-1zM95 284h1v1h-1zM233 284h2v1h-2zM411 284h1v1h-1zM514 284h3v1h-3zM654 284h1v1h-1zM95 285h1v1h-1zM235 285h2v1h-2zM411 285h1v1h-1zM510 285h4v1h-4zM654 285h1v1h-1zM95 286h1v1h-1zM237 286h2v1h-2zM411 286h1v1h-1zM507 286h3v1h-3zM654 286h1v1h-1zM95 287h1v1h-1zM239 287h3v1h-3zM411 287h1v1h-1zM503 287h4v1h-4zM654 287h1v1h-1zM95 288h1v1h-1zM242 288h2v1h-2zM411 288h1v1h-1zM500 288h3v1h-3zM654 288h1v1h-1zM95 289h1v1h-1zM244 289h2v1h-2zM411 289h1v1h-1zM497 289h3v1h-3zM654 289h1v1h-1zM95 290h1v1h-1zM246 290h2v1h-2zM411 290h1v1h-1zM493 290h4v1h-4zM654 290h1v1h-1zM95 291h1v1h-1zM248 291h2v1h-2zM411 291h1v1h-1zM490 291h3v1h-3zM654 291h1v1h-1zM95 292h1v1h-1zM250 292h2v1h-2zM411 292h1v1h-1zM486 292h4v1h-4zM654 292h1v1h-1zM95 293h1v1h-1zM252 293h2v1h-2zM411 293h1v1h-1zM483 293h3v1h-3zM654 293h1v1h-1zM95 294h1v1h-1zM254 294h2v1h-2zM411 294h1v1h-1zM479 294h4v1h-4zM654 294h1v1h-1zM95 295h1v1h-1zM256 295h2v1h-2zM411 295h1v1h-1zM476 295h3v1h-3zM654 295h1v1h-1zM95 296h1v1h-1zM258 296h2v1h-2zM411 296h1v1h-1zM472 296h4v1h-4zM654 296h1v1h-1zM95 297h1v1h-1zM260 297h2v1h-2zM411 297h1v1h-1zM469 297h3v1h-3zM654 297h1v1h-1zM95 298h1v1h-1zM262 298h2v1h-2zM411 298h1v1h-1zM465 298h4v1h-4zM654 298h1v1h-1zM95 299h1v1h-1zM264 299h2v1h-2zM411 299h1v1h-1zM462 299h3v1h-3zM654 299h1v1h-1zM95 300h1v1h-1zM266 300h2v1h-2zM411 300h1v1h-1zM458 300h4v1h-4zM654 300h1v1h-1zM95 301h1v1h-1zM268 301h2v1h-2zM411 301h1v1h-1zM455 301h3v1h-3zM654 301h1v1h-1zM95 302h1v1h-1zM270 302h2v1h-2zM411 302h1v1h-1zM451 302h4v1h-4zM654 302h1v1h-1zM95 303h1v1h-1zM272 303h2v1h-2zM411 303h1v1h-1zM448 303h3v1h-3zM654 303h1v1h-1zM95 304h1v1h-1zM274 304h2v1h-2zM411 304h1v1h-1zM444 304h4v1h-4zM654 304h1v1h-1zM95 305h1v1h-1zM276 305h2v1h-2zM411 305h1v1h-1zM441 305h3v1h-3zM654 305h1v1h-1zM95 306h1v1h-1zM278 306h2v1h-2zM411 306h1v1h-1zM437 306h4v1h-4zM654 306h1v1h-1zM95 307h1v1h-1zM280 307h2v1h-2zM411 307h1v1h-1zM434 307h3v1h-3zM654 307h1v1h-1zM95 308h1v1h-1zM282 308h2v1h-2zM411 308h1v1h-1zM431 308h3v1h-3zM654 308h1v1h-1zM95 309h1v1h-1zM284 309h2v1h-2zM411 309h1v1h-1zM427 309h4v1h-4zM654 309h1v1h-1zM95 310h1v1h-1zM286 310h2v1h-2zM411 310h1v1h-1zM424 310h3v1h-3zM654 310h1v1h-1zM95 311h1v1h-1zM288 311h3v1h-3zM411 311h1v1h-1zM420 311h4v1h-4zM654 311h1v1h-1zM95 312h1v1h-1zM291 312h2v1h-2zM411 312h1v1h-1zM417 312h3v1h-3zM654 312h1v1h-1zM95 313h1v1h-1zM293 313h2v1h-2zM411 313h1v1h-1zM413 313h4v1h-4zM654 313h1v1h-1zM95 314h1v1h-1zM295 314h2v1h-2zM410 314h3v1h-3zM654 314h1v1h-1zM95 315h1v1h-1zM297 315h2v1h-2zM406 315h4v1h-4zM411 315h1v1h-1zM654 315h1v1h-1zM95 316h1v1h-1zM299 316h2v1h-2zM403 316h3v1h-3zM411 316h1v1h-1zM654 316h1v1h-1zM95 317h1v1h-1zM301 317h2v1h-2zM399 317h4v1h-4zM411 317h1v1h-1zM654 317h1v1h-1zM95 318h1v1h-1zM303 318h2v1h-2zM396 318h3v1h-3zM411 318h1v1h-1zM654 318h1v1h-1zM95 319h1v1h-1zM305 319h2v1h-2zM392 319h4v1h-4zM411 319h1v1h-1zM654 319h1v1h-1zM95 320h1v1h-1zM307 320h2v1h-2zM389 320h3v1h-3zM411 320h1v1h-1zM654 320h1v1h-1zM95 321h1v1h-1zM309 321h2v1h-2zM385 321h4v1h-4zM411 321h1v1h-1zM654 321h1v1h-1zM95 322h1v1h-1zM311 322h2v1h-2zM382 322h3v1h-3zM411 322h1v1h-1zM654 322h1v1h-1zM95 323h1v1h-1zM313 323h2v1h-2zM378 323h4v1h-4zM411 323h1v1h-1zM654 323h1v1h-1zM95 324h1v1h-1zM315 324h2v1h-2zM375 324h3v1h-3zM411 324h1v1h-1zM654 324h1v1h-1zM95 325h1v1h-1zM317 325h2v1h-2zM371 325h4v1h-4zM411 325h1v1h-1zM654 325h1v1h-1zM95 326h1v1h-1zM319 326h2v1h-2zM368 326h3v1h-3zM411 326h1v1h-1zM654 326h1v1h-1zM95 327h1v1h-1zM321 327h2v1h-2zM365 327h3v1h-3zM411 327h1v1h-1zM654 327h1v1h-1zM95 328h1v1h-1zM323 328h2v1h-2zM361 328h4v1h-4zM411 328h1v1h-1zM654 328h1v1h-1zM95 329h1v1h-1zM325 329h2v1h-2zM358 329h3v1h-3zM411 329h1v1h-1zM654 329h1v1h-1zM95 330h1v1h-1zM327 330h2v1h-2zM354 330h4v1h-4zM411 330h1v1h-1zM654 330h1v1h-1zM95 331h1v1h-1zM329 331h2v1h-2zM351 331h3v1h-3zM411 331h1v1h-1zM654 331h1v1h-1zM95 332h1v1h-1zM331 332h2v1h-2zM347 332h4v1h-4zM411 332h1v1h-1zM654 332h1v1h-1zM95 333h1v1h-1zM333 333h2v1h-2zM344 333h3v1h-3zM411 333h1v1h-1zM654 333h1v1h-1zM95 334h1v1h-1zM335 334h2v1h-2zM340 334h4v1h-4zM411 334h1v1h-1zM654 334h1v1h-1zM95 335h1v1h-1zM337 335h3v1h-3zM411 335h1v1h-1zM654 335h1v1h-1zM95 336h1v1h-1zM338 336h1v1h-1zM411 336h1v1h-1zM654 336h1v1h-1zM95 337h1v1h-1zM338 337h1v1h-1zM411 337h1v1h-1zM654 337h1v1h-1zM95 338h1v1h-1zM338 338h1v1h-1zM411 338h1v1h-1zM654 338h1v1h-1zM95 339h1v1h-1zM338 339h1v1h-1zM411 339h1v1h-1zM654 339h1v1h-1zM95 340h1v1h-1zM338 340h1v1h-1zM411 340h1v1h-1zM654 340h1v1h-1zM95 341h1v1h-1zM338 341h1v1h-1zM411 341h1v1h-1zM654 341h1v1h-1zM95 342h1v1h-1zM338 342h1v1h-1zM411 342h1v1h-1zM654 342h1v1h-1zM88 343h2v1h-2zM95 343h1v1h-1zM338 343h1v1h-1zM411 343h1v1h-1zM654 343h1v1h-1zM90 344h2v1h-2zM95 344h1v1h-1zM338 344h1v1h-1zM411 344h1v1h-1zM654 344h1v1h-1zM92 345h2v1h-2zM95 345h1v1h-1zM338 345h1v1h-1zM411 345h1v1h-1zM654 345h1v1h-1zM94 346h2v1h-2zM338 346h1v1h-1zM411 346h1v1h-1zM654 346h1v1h-1zM95 347h1v1h-1zM338 347h1v1h-1zM411 347h1v1h-1zM654 347h1v1h-1zM95 348h1v1h-1zM338 348h1v1h-1zM411 348h1v1h-1zM654 348h1v1h-1zM95 349h1v1h-1zM338 349h1v1h-1zM411 349h1v1h-1zM654 349h1v1h-1zM95 350h1v1h-1zM338 350h1v1h-1zM411 350h1v1h-1zM654 350h1v1h-1zM95 351h1v1h-1zM338 351h1v1h-1zM411 351h1v1h-1zM654 351h1v1h-1zM95 352h1v1h-1zM338 352h1v1h-1zM411 352h1v1h-1zM654 352h1v1h-1zM95 353h1v1h-1zM338 353h1v1h-1zM411 353h1v1h-1zM654 353h1v1h-1zM95 354h1v1h-1zM338 354h1v1h-1zM411 354h1v1h-1zM654 354h1v1h-1zM95 355h1v1h-1zM338 355h1v1h-1zM411 355h1v1h-1zM654 355h1v1h-1zM95 356h1v1h-1zM338 356h1v1h-1zM411 356h1v1h-1zM654 356h1v1h-1zM95 357h1v1h-1zM338 357h1v1h-1zM411 357h1v1h-1zM654 357h1v1h-1zM95 358h1v1h-1zM338 358h1v1h-1zM411 358h1v1h-1zM654 358h1v1h-1zM95 359h1v1h-1zM338 359h1v1h-1zM411 359h1v1h-1zM654 359h1v1h-1zM95 360h1v1h-1zM338 360h1v1h-1zM411 360h1v1h-1zM654 360h1v1h-1zM95 361h1v1h-1zM338 361h1v1h-1zM411 361h1v1h-1zM654 361h1v1h-1zM95 362h1v1h-1zM338 362h1v1h-1zM411 362h1v1h-1zM654 362h1v1h-1zM95 363h1v1h-1zM338 363h1v1h-1zM411 363h1v1h-1zM654 363h1v1h-1zM95 364h1v1h-1zM338 364h1v1h-1zM411 364h1v1h-1zM654 364h1v1h-1zM95 365h1v1h-1zM338 365h1v1h-1zM411 365h1v1h-1zM654 365h1v1h-1zM95 366h1v1h-1zM338 366h1v1h-1zM411 366h1v1h-1zM654 366h1v1h-1zM95 367h1v1h-1zM338 367h1v1h-1zM411 367h1v1h-1zM654 367h1v1h-1zM95 368h1v1h-1zM338 368h1v1h-1zM411 368h1v1h-1zM654 368h1v1h-1zM95 369h1v1h-1zM338 369h1v1h-1zM411 369h1v1h-1zM654 369h1v1h-1zM95 370h1v1h-1zM338 370h1v1h-1zM411 370h1v1h-1zM654 370h1v1h-1zM95 371h1v1h-1zM338 371h1v1h-1zM411 371h1v1h-1zM654 371h1v1h-1zM95 372h1v1h-1zM338 372h1v1h-1zM411 372h1v1h-1zM654 372h1v1h-1zM95 373h1v1h-1zM338 373h1v1h-1zM411 373h1v1h-1zM654 373h1v1h-1zM95 374h1v1h-1zM338 374h1v1h-1zM411 374h1v1h-1zM654 374h1v1h-1zM95 375h1v1h-1zM338 375h1v1h-1zM411 375h1v1h-1zM654 375h1v1h-1zM95 376h1v1h-1zM338 376h1v1h-1zM411 376h1v1h-1zM654 376h1v1h-1zM95 377h1v1h-1zM338 377h1v1h-1zM411 377h1v1h-1zM654 377h1v1h-1zM95 378h1v1h-1zM338 378h1v1h-1zM411 378h1v1h-1zM654 378h1v1h-1zM95 379h1v1h-1zM338 379h1v1h-1zM411 379h1v1h-1zM654 379h1v1h-1zM95 380h1v1h-1zM338 380h1v1h-1zM411 380h1v1h-1zM654 380h1v1h-1zM95 381h1v1h-1zM338 381h1v1h-1zM411 381h1v1h-1zM654 381h1v1h-1zM95 382h1v1h-1zM338 382h1v1h-1zM411 382h1v1h-1zM654 382h1v1h-1zM95 383h1v1h-1zM338 383h1v1h-1zM411 383h1v1h-1zM654 383h1v1h-1zM95 384h1v1h-1zM338 384h1v1h-1zM410 384h3v1h-3zM654 384h1v1h-1zM95 385h1v1h-1zM338 385h1v1h-1zM406 385h4v1h-4zM413 385h2v1h-2zM654 385h1v1h-1zM95 386h1v1h-1zM338 386h1v1h-1zM403 386h3v1h-3zM415 386h2v1h-2zM654 386h1v1h-1zM95 387h1v1h-1zM338 387h1v1h-1zM399 387h4v1h-4zM417 387h2v1h-2zM654 387h1v1h-1zM95 388h1v1h-1zM338 388h1v1h-1zM396 388h3v1h-3zM419 388h2v1h-2zM654 388h1v1h-1zM95 389h1v1h-1zM338 389h1v1h-1zM392 389h4v1h-4zM421 389h2v1h-2zM654 389h1v1h-1zM95 390h1v1h-1zM338 390h1v1h-1zM389 390h3v1h-3zM423 390h2v1h-2zM654 390h1v1h-1zM95 391h1v1h-1zM338 391h1v1h-1zM385 391h4v1h-4zM425 391h2v1h-2zM654 391h1v1h-1zM95 392h1v1h-1zM338 392h1v1h-1zM382 392h3v1h-3zM427 392h2v1h-2zM654 392h1v1h-1zM95 393h1v1h-1zM338 393h1v1h-1zM379 393h3v1h-3zM429 393h2v1h-2zM654 393h1v1h-1zM95 394h1v1h-1zM338 394h1v1h-1zM375 394h4v1h-4zM431 394h2v1h-2zM654 394h1v1h-1zM95 395h1v1h-1zM338 395h1v1h-1zM372 395h3v1h-3zM433 395h2v1h-2zM654 395h1v1h-1zM95 396h1v1h-1zM338 396h1v1h-1zM368 396h4v1h-4zM435 396h2v1h-2zM654 396h1v1h-1zM95 397h1v1h-1zM338 397h1v1h-1zM365 397h3v1h-3zM437 397h2v1h-2zM654 397h1v1h-1zM95 398h1v1h-1zM338 398h1v1h-1zM361 398h4v1h-4zM439 398h2v1h-2zM654 398h1v1h-1zM95 399h1v1h-1zM338 399h1v1h-1zM358 399h3v1h-3zM441 399h2v1h-2zM654 399h1v1h-1zM95 400h1v1h-1zM338 400h1v1h-1zM354 400h4v1h-4zM443 400h2v1h-2zM654 400h1v1h-1zM95 401h1v1h-1zM338 401h1v1h-1zM351 401h3v1h-3zM445 401h2v1h-2zM654 401h1v1h-1zM95 402h1v1h-1zM338 402h1v1h-1zM347 402h4v1h-4zM447 402h2v1h-2zM654 402h1v1h-1zM95 403h1v1h-1zM338 403h1v1h-1zM344 403h3v1h-3zM449 403h2v1h-2zM654 403h1v1h-1zM95 404h1v1h-1zM338 404h1v1h-1zM340 404h4v1h-4zM451 404h2v1h-2zM654 404h1v1h-1zM95 405h1v1h-1zM337 405h3v1h-3zM453 405h2v1h-2zM654 405h1v1h-1zM95 406h1v1h-1zM333 406h4v1h-4zM338 406h1v1h-1zM455 406h2v1h-2zM654 406h1v1h-1zM88 407h2v1h-2zM95 407h1v1h-1zM330 407h3v1h-3zM338 407h1v1h-1zM457 407h2v1h-2zM654 407h1v1h-1zM90 408h2v1h-2zM95 408h1v1h-1zM326 408h4v1h-4zM338 408h1v1h-1zM459 408h3v1h-3zM654 408h1v1h-1zM92 409h2v1h-2zM95 409h1v1h-1zM323 409h3v1h-3zM338 409h1v1h-1zM462 409h2v1h-2zM654 409h1v1h-1zM94 410h2v1h-2zM319 410h4v1h-4zM338 410h1v1h-1zM464 410h2v1h-2zM654 410h1v1h-1zM95 411h1v1h-1zM316 411h3v1h-3zM338 411h1v1h-1zM466 411h2v1h-2zM654 411h1v1h-1zM95 412h1v1h-1zM313 412h3v1h-3zM338 412h1v1h-1zM468 412h2v1h-2zM654 412h1v1h-1zM95 413h1v1h-1zM309 413h4v1h-4zM338 413h1v1h-1zM470 413h2v1h-2zM654 413h1v1h-1zM95 414h1v1h-1zM306 414h3v1h-3zM338 414h1v1h-1zM472 414h2v1h-2zM654 414h1v1h-1zM95 415h1v1h-1zM302 415h4v1h-4zM338 415h1v1h-1zM474 415h2v1h-2zM654 415h1v1h-1zM95 416h1v1h-1zM299 416h3v1h-3zM338 416h1v1h-1zM476 416h2v1h-2zM654 416h1v1h-1zM95 417h1v1h-1zM295 417h4v1h-4zM338 417h1v1h-1zM478 417h2v1h-2zM654 417h1v1h-1zM95 418h1v1h-1zM292 418h3v1h-3zM338 418h1v1h-1zM480 418h2v1h-2zM654 418h1v1h-1zM95 419h1v1h-1zM288 419h4v1h-4zM338 419h1v1h-1zM482 419h2v1h-2zM654 419h1v1h-1zM95 420h1v1h-1zM285 420h3v1h-3zM338 420h1v1h-1zM484 420h2v1h-2zM654 420h1v1h-1zM95 421h1v1h-1zM281 421h4v1h-4zM338 421h1v1h-1zM486 421h2v1h-2zM654 421h1v1h-1zM95 422h1v1h-1zM278 422h3v1h-3zM338 422h1v1h-1zM488 422h2v1h-2zM654 422h1v1h-1zM95 423h1v1h-1zM274 423h4v1h-4zM338 423h1v1h-1zM490 423h2v1h-2zM654 423h1v1h-1zM95 424h1v1h-1zM271 424h3v1h-3zM338 424h1v1h-1zM492 424h2v1h-2zM654 424h1v1h-1zM95 425h1v1h-1zM267 425h4v1h-4zM338 425h1v1h-1zM494 425h2v1h-2zM654 425h1v1h-1zM95 426h1v1h-1zM264 426h3v1h-3zM338 426h1v1h-1zM496 426h2v1h-2zM654 426h1v1h-1zM95 427h1v1h-1zM260 427h4v1h-4zM338 427h1v1h-1zM498 427h2v1h-2zM654 427h1v1h-1zM95 428h1v1h-1zM257 428h3v1h-3zM338 428h1v1h-1zM500 428h2v1h-2zM654 428h1v1h-1zM95 429h1v1h-1zM254 429h3v1h-3zM338 429h1v1h-1zM502 429h2v1h-2zM654 429h1v1h-1zM95 430h1v1h-1zM250 430h4v1h-4zM338 430h1v1h-1zM504 430h2v1h-2zM654 430h1v1h-1zM95 431h1v1h-1zM247 431h3v1h-3zM338 431h1v1h-1zM506 431h2v1h-2zM654 431h1v1h-1zM95 432h1v1h-1zM243 432h4v1h-4zM338 432h1v1h-1zM508 432h3v1h-3zM654 432h1v1h-1zM95 433h1v1h-1zM240 433h3v1h-3zM338 433h1v1h-1zM511 433h2v1h-2zM654 433h1v1h-1zM95 434h1v1h-1zM236 434h4v1h-4zM338 434h1v1h-1zM513 434h2v1h-2zM654 434h1v1h-1zM95 435h1v1h-1zM233 435h3v1h-3zM338 435h1v1h-1zM515 435h2v1h-2zM654 435h1v1h-1zM95 436h1v1h-1zM229 436h4v1h-4zM338 436h1v1h-1zM517 436h2v1h-2zM654 436h1v1h-1zM95 437h1v1h-1zM226 437h3v1h-3zM338 437h1v1h-1zM519 437h2v1h-2zM654 437h1v1h-1zM95 438h1v1h-1zM222 438h4v1h-4zM338 438h1v1h-1zM521 438h2v1h-2zM654 438h1v1h-1zM95 439h1v1h-1zM219 439h3v1h-3zM338 439h1v1h-1zM523 439h2v1h-2zM654 439h1v1h-1zM95 440h1v1h-1zM215 440h4v1h-4zM338 440h1v1h-1zM525 440h2v1h-2zM654 440h1v1h-1zM95 441h1v1h-1zM212 441h3v1h-3zM338 441h1v1h-1zM527 441h2v1h-2zM654 441h1v1h-1zM95 442h1v1h-1zM208 442h4v1h-4zM338 442h1v1h-1zM529 442h2v1h-2zM654 442h1v1h-1zM95 443h1v1h-1zM205 443h3v1h-3zM338 443h1v1h-1zM531 443h2v1h-2zM654 443h1v1h-1zM95 444h1v1h-1zM201 444h4v1h-4zM338 444h1v1h-1zM533 444h2v1h-2zM654 444h1v1h-1zM95 445h1v1h-1zM198 445h3v1h-3zM338 445h1v1h-1zM535 445h2v1h-2zM654 445h1v1h-1zM95 446h1v1h-1zM194 446h4v1h-4zM338 446h1v1h-1zM537 446h2v1h-2zM654 446h1v1h-1zM95 447h1v1h-1zM191 447h3v1h-3zM338 447h1v1h-1zM539 447h2v1h-2zM654 447h1v1h-1zM95 448h1v1h-1zM188 448h3v1h-3zM338 448h1v1h-1zM541 448h2v1h-2zM654 448h1v1h-1zM95 449h1v1h-1zM184 449h4v1h-4zM338 449h1v1h-1zM543 449h2v1h-2zM654 449h1v1h-1zM95 450h1v1h-1zM181 450h3v1h-3zM338 450h1v1h-1zM545 450h2v1h-2zM654 450h1v1h-1zM95 451h1v1h-1zM177 451h4v1h-4zM338 451h1v1h-1zM547 451h2v1h-2zM654 451h1v1h-1zM95 452h1v1h-1zM174 452h3v1h-3zM338 452h1v1h-1zM549 452h2v1h-2zM654 452h1v1h-1zM95 453h1v1h-1zM170 453h4v1h-4zM338 453h1v1h-1zM551 453h2v1h-2zM654 453h1v1h-1zM95 454h1v1h-1zM167 454h3v1h-3zM338 454h1v1h-1zM553 454h2v1h-2zM654 454h1v1h-1zM95 455h1v1h-1zM163 455h4v1h-4zM338 455h1v1h-1zM555 455h3v1h-3zM654 455h1v1h-1zM95 456h1v1h-1zM160 456h3v1h-3zM338 456h1v1h-1zM558 456h2v1h-2zM654 456h1v1h-1zM95 457h1v1h-1zM156 457h4v1h-4zM338 457h1v1h-1zM560 457h2v1h-2zM654 457h1v1h-1zM95 458h1v1h-1zM153 458h3v1h-3zM338 458h1v1h-1zM562 458h2v1h-2zM654 458h1v1h-1zM95 459h1v1h-1zM149 459h4v1h-4zM338 459h1v1h-1zM564 459h2v1h-2zM654 459h1v1h-1zM95 460h1v1h-1zM146 460h3v1h-3zM338 460h1v1h-1zM566 460h2v1h-2zM654 460h1v1h-1zM95 461h1v1h-1zM142 461h4v1h-4zM338 461h1v1h-1zM568 461h2v1h-2zM654 461h1v1h-1zM95 462h1v1h-1zM139 462h3v1h-3zM338 462h1v1h-1zM570 462h2v1h-2zM654 462h1v1h-1zM95 463h1v1h-1zM135 463h4v1h-4zM338 463h1v1h-1zM572 463h2v1h-2zM654 463h1v1h-1zM95 464h1v1h-1zM132 464h3v1h-3zM338 464h1v1h-1zM574 464h2v1h-2zM654 464h1v1h-1zM95 465h1v1h-1zM128 465h4v1h-4zM338 465h1v1h-1zM576 465h2v1h-2zM654 465h1v1h-1zM95 466h1v1h-1zM125 466h3v1h-3zM338 466h1v1h-1zM578 466h2v1h-2zM654 466h1v1h-1zM95 467h1v1h-1zM122 467h3v1h-3zM338 467h1v1h-1zM580 467h2v1h-2zM654 467h1v1h-1zM95 468h1v1h-1zM118 468h4v1h-4zM338 468h1v1h-1zM582 468h2v1h-2zM654 468h1v1h-1zM95 469h1v1h-1zM115 469h3v1h-3zM338 469h1v1h-1zM584 469h2v1h-2zM654 469h1v1h-1zM95 470h1v1h-1zM111 470h4v1h-4zM338 470h1v1h-1zM586 470h2v1h-2zM654 470h1v1h-1zM95 471h1v1h-1zM108 471h3v1h-3zM338 471h1v1h-1zM588 471h2v1h-2zM654 471h1v1h-1zM88 472h2v1h-2zM95 472h1v1h-1zM104 472h4v1h-4zM338 472h1v1h-1zM590 472h2v1h-2zM654 472h1v1h-1zM90 473h2v1h-2zM95 473h1v1h-1zM101 473h3v1h-3zM338 473h1v1h-1zM592 473h2v1h-2zM654 473h1v1h-1zM92 474h2v1h-2zM95 474h1v1h-1zM97 474h4v1h-4zM338 474h1v1h-1zM594 474h2v1h-2zM654 474h1v1h-1zM94 475h3v1h-3zM338 475h1v1h-1zM596 475h2v1h-2zM654 475h1v1h-1zM92 476h2v1h-2zM97 476h2v1h-2zM338 476h1v1h-1zM598 476h2v1h-2zM654 476h1v1h-1zM89 477h3v1h-3zM99 477h2v1h-2zM338 477h1v1h-1zM600 477h2v1h-2zM654 477h1v1h-1zM87 478h2v1h-2zM101 478h2v1h-2zM338 478h1v1h-1zM602 478h2v1h-2zM654 478h1v1h-1zM103 479h2v1h-2zM338 479h1v1h-1zM604 479h3v1h-3zM654 479h1v1h-1zM105 480h2v1h-2zM338 480h1v1h-1zM607 480h2v1h-2zM654 480h1v1h-1zM107 481h2v1h-2zM338 481h1v1h-1zM609 481h2v1h-2zM654 481h1v1h-1zM109 482h2v1h-2zM338 482h1v1h-1zM611 482h2v1h-2zM654 482h1v1h-1zM111 483h2v1h-2zM338 483h1v1h-1zM613 483h2v1h-2zM654 483h1v1h-1zM113 484h2v1h-2zM338 484h1v1h-1zM615 484h2v1h-2zM654 484h1v1h-1zM115 485h2v1h-2zM338 485h1v1h-1zM617 485h2v1h-2zM654 485h1v1h-1zM117 486h2v1h-2zM338 486h1v1h-1zM619 486h2v1h-2zM654 486h1v1h-1zM119 487h2v1h-2zM338 487h1v1h-1zM621 487h2v1h-2zM654 487h1v1h-1zM121 488h2v1h-2zM338 488h1v1h-1zM623 488h2v1h-2zM654 488h1v1h-1zM123 489h2v1h-2zM338 489h1v1h-1zM625 489h2v1h-2zM654 489h1v1h-1zM125 490h2v1h-2zM338 490h1v1h-1zM627 490h2v1h-2zM654 490h1v1h-1zM127 491h2v1h-2zM338 491h1v1h-1zM629 491h2v1h-2zM654 491h1v1h-1zM129 492h3v1h-3zM338 492h1v1h-1zM631 492h2v1h-2zM654 492h1v1h-1zM132 493h2v1h-2zM338 493h1v1h-1zM633 493h2v1h-2zM654 493h1v1h-1zM134 494h2v1h-2zM338 494h1v1h-1zM635 494h2v1h-2zM654 494h1v1h-1zM136 495h2v1h-2zM338 495h1v1h-1zM637 495h2v1h-2zM654 495h1v1h-1zM138 496h2v1h-2zM338 496h1v1h-1zM639 496h2v1h-2zM654 496h1v1h-1zM140 497h2v1h-2zM338 497h1v1h-1zM641 497h2v1h-2zM654 497h1v1h-1zM142 498h2v1h-2zM338 498h1v1h-1zM643 498h2v1h-2zM654 498h1v1h-1zM144 499h2v1h-2zM338 499h1v1h-1zM645 499h2v1h-2zM654 499h1v1h-1zM146 500h2v1h-2zM338 500h1v1h-1zM647 500h2v1h-2zM654 500h1v1h-1zM148 501h2v1h-2zM338 501h1v1h-1zM649 501h2v1h-2zM654 501h1v1h-1zM150 502h2v1h-2zM338 502h1v1h-1zM651 502h2v1h-2zM654 502h1v1h-1zM152 503h2v1h-2zM338 503h1v1h-1zM653 503h2v1h-2zM154 504h2v1h-2zM338 504h1v1h-1zM649 504h4v1h-4zM655 504h2v1h-2zM155 505h3v1h-3zM338 505h1v1h-1zM646 505h3v1h-3zM657 505h2v1h-2zM153 506h2v1h-2zM158 506h2v1h-2zM338 506h1v1h-1zM642 506h4v1h-4zM659 506h2v1h-2zM150 507h3v1h-3zM160 507h2v1h-2zM338 507h1v1h-1zM639 507h3v1h-3zM661 507h2v1h-2zM148 508h2v1h-2zM162 508h2v1h-2zM338 508h1v1h-1zM635 508h4v1h-4zM164 509h3v1h-3zM338 509h1v1h-1zM632 509h3v1h-3zM167 510h2v1h-2zM338 510h1v1h-1zM628 510h4v1h-4zM169 511h2v1h-2zM338 511h1v1h-1zM625 511h3v1h-3zM171 512h2v1h-2zM338 512h1v1h-1zM621 512h4v1h-4zM173 513h2v1h-2zM338 513h1v1h-1zM618 513h3v1h-3zM175 514h2v1h-2zM338 514h1v1h-1zM614 514h4v1h-4zM177 515h2v1h-2zM338 515h1v1h-1zM611 515h3v1h-3zM179 516h2v1h-2zM338 516h1v1h-1zM607 516h4v1h-4zM181 517h2v1h-2zM338 517h1v1h-1zM604 517h3v1h-3zM183 518h2v1h-2zM338 518h1v1h-1zM600 518h4v1h-4zM185 519h2v1h-2zM338 519h1v1h-1zM597 519h3v1h-3zM187 520h2v1h-2zM338 520h1v1h-1zM593 520h4v1h-4zM189 521h2v1h-2zM338 521h1v1h-1zM590 521h3v1h-3zM191 522h2v1h-2zM338 522h1v1h-1zM586 522h4v1h-4zM193 523h2v1h-2zM338 523h1v1h-1zM583 523h3v1h-3zM195 524h2v1h-2zM338 524h1v1h-1zM579 524h4v1h-4zM197 525h2v1h-2zM338 525h1v1h-1zM576 525h3v1h-3zM199 526h3v1h-3zM338 526h1v1h-1zM572 526h4v1h-4zM202 527h2v1h-2zM338 527h1v1h-1zM568 527h4v1h-4zM576 527h2v1h-2zM204 528h2v1h-2zM338 528h1v1h-1zM565 528h3v1h-3zM578 528h2v1h-2zM206 529h2v1h-2zM338 529h1v1h-1zM561 529h4v1h-4zM580 529h2v1h-2zM208 530h2v1h-2zM338 530h1v1h-1zM558 530h3v1h-3zM582 530h2v1h-2zM210 531h2v1h-2zM338 531h1v1h-1zM554 531h4v1h-4zM212 532h2v1h-2zM338 532h1v1h-1zM551 532h3v1h-3zM214 533h2v1h-2zM338 533h1v1h-1zM547 533h4v1h-4zM216 534h2v1h-2zM338 534h1v1h-1zM544 534h3v1h-3zM214 535h2v1h-2zM218 535h2v1h-2zM338 535h1v1h-1zM540 535h4v1h-4zM211 536h3v1h-3zM220 536h2v1h-2zM338 536h1v1h-1zM537 536h3v1h-3zM209 537h2v1h-2zM222 537h2v1h-2zM338 537h1v1h-1zM533 537h4v1h-4zM224 538h2v1h-2zM338 538h1v1h-1zM530 538h3v1h-3zM226 539h2v1h-2zM338 539h1v1h-1zM526 539h4v1h-4zM228 540h2v1h-2zM338 540h1v1h-1zM523 540h3v1h-3zM230 541h2v1h-2zM338 541h1v1h-1zM519 541h4v1h-4zM232 542h3v1h-3zM338 542h1v1h-1zM516 542h3v1h-3zM235 543h2v1h-2zM338 543h1v1h-1zM512 543h4v1h-4zM237 544h2v1h-2zM338 544h1v1h-1zM509 544h3v1h-3zM239 545h2v1h-2zM338 545h1v1h-1zM505 545h4v1h-4zM241 546h2v1h-2zM338 546h1v1h-1zM502 546h3v1h-3zM243 547h2v1h-2zM338 547h1v1h-1zM498 547h4v1h-4zM245 548h2v1h-2zM338 548h1v1h-1zM495 548h3v1h-3zM247 549h2v1h-2zM338 549h1v1h-1zM491 549h4v1h-4zM497 549h2v1h-2zM249 550h2v1h-2zM338 550h1v1h-1zM488 550h3v1h-3zM499 550h2v1h-2zM251 551h2v1h-2zM338 551h1v1h-1zM484 551h4v1h-4zM501 551h2v1h-2zM253 552h2v1h-2zM338 552h1v1h-1zM481 552h3v1h-3zM503 552h2v1h-2zM255 553h2v1h-2zM338 553h1v1h-1zM477 553h4v1h-4zM257 554h2v1h-2zM338 554h1v1h-1zM474 554h3v1h-3zM259 555h2v1h-2zM338 555h1v1h-1zM470 555h4v1h-4zM261 556h2v1h-2zM338 556h1v1h-1zM467 556h3v1h-3zM263 557h2v1h-2zM338 557h1v1h-1zM463 557h4v1h-4zM265 558h2v1h-2zM338 558h1v1h-1zM460 558h3v1h-3zM267 559h3v1h-3zM338 559h1v1h-1zM456 559h4v1h-4zM270 560h2v1h-2zM338 560h1v1h-1zM453 560h3v1h-3zM272 561h2v1h-2zM338 561h1v1h-1zM449 561h4v1h-4zM274 562h2v1h-2zM338 562h1v1h-1zM446 562h3v1h-3zM276 563h2v1h-2zM338 563h1v1h-1zM442 563h4v1h-4zM276 564h4v1h-4zM338 564h1v1h-1zM439 564h3v1h-3zM274 565h2v1h-2zM280 565h2v1h-2zM338 565h1v1h-1zM435 565h4v1h-4zM271 566h3v1h-3zM282 566h2v1h-2zM338 566h1v1h-1zM432 566h3v1h-3zM269 567h2v1h-2zM284 567h2v1h-2zM338 567h1v1h-1zM428 567h4v1h-4zM286 568h2v1h-2zM338 568h1v1h-1zM425 568h3v1h-3zM288 569h2v1h-2zM338 569h1v1h-1zM421 569h4v1h-4zM290 570h2v1h-2zM338 570h1v1h-1zM418 570h3v1h-3zM292 571h2v1h-2zM338 571h1v1h-1zM414 571h4v1h-4zM294 572h2v1h-2zM338 572h1v1h-1zM410 572h4v1h-4zM418 572h2v1h-2zM296 573h2v1h-2zM338 573h1v1h-1zM407 573h3v1h-3zM420 573h2v1h-2zM298 574h2v1h-2zM338 574h1v1h-1zM403 574h4v1h-4zM422 574h2v1h-2zM300 575h2v1h-2zM338 575h1v1h-1zM400 575h3v1h-3zM424 575h2v1h-2zM302 576h3v1h-3zM338 576h1v1h-1zM396 576h4v1h-4zM305 577h2v1h-2zM338 577h1v1h-1zM393 577h3v1h-3zM307 578h2v1h-2zM338 578h1v1h-1zM389 578h4v1h-4zM309 579h2v1h-2zM338 579h1v1h-1zM386 579h3v1h-3zM311 580h2v1h-2zM338 580h1v1h-1zM382 580h4v1h-4zM313 581h2v1h-2zM338 581h1v1h-1zM379 581h3v1h-3zM315 582h2v1h-2zM338 582h1v1h-1zM375 582h4v1h-4zM317 583h2v1h-2zM338 583h1v1h-1zM372 583h3v1h-3zM319 584h2v1h-2zM338 584h1v1h-1zM368 584h4v1h-4zM321 585h2v1h-2zM338 585h1v1h-1zM365 585h3v1h-3zM323 586h2v1h-2zM338 586h1v1h-1zM361 586h4v1h-4zM325 587h2v1h-2zM338 587h1v1h-1zM358 587h3v1h-3zM327 588h2v1h-2zM338 588h1v1h-1zM354 588h4v1h-4zM329 589h2v1h-2zM338 589h1v1h-1zM351 589h3v1h-3zM331 590h2v1h-2zM338 590h1v1h-1zM347 590h4v1h-4zM333 591h2v1h-2zM338 591h1v1h-1zM344 591h3v1h-3zM335 592h2v1h-2zM338 592h1v1h-1zM340 592h4v1h-4zM337 593h3v1h-3zM335 594h2v1h-2zM339 594h2v1h-2zM332 595h3v1h-3zM341 595h2v1h-2zM330 596h2v1h-2zM343 596h2v1h-2zM345 597h2v1h-2z" fill="#000"/>
<path d="M480 206h1v1h-1zM481 207h2v1h-2zM483 208h1v1h-1zM484 209h1v1h-1zM485 210h2v1h-2zM487 211h1v1h-1zM488 212h1v1h-1zM489 213h2v1h-2zM491 214h1v1h-1zM321 215h14v1h-14zM492 215h1v1h-1zM317 216h4v1h-4zM335 216h4v1h-4zM493 216h1v1h-1zM313 217h4v1h-4zM339 217h5v1h-5zM494 217h1v1h-1zM311 218h2v1h-2zM344 218h6v1h-6zM495 218h1v1h-1zM308 219h3v1h-3zM350 219h3v1h-3zM496 219h2v1h-2zM306 220h2v1h-2zM353 220h2v1h-2zM498 220h1v1h-1zM304 221h2v1h-2zM355 221h2v1h-2zM499 221h1v1h-1zM302 222h2v1h-2zM357 222h2v1h-2zM500 222h1v1h-1zM300 223h2v1h-2zM359 223h2v1h-2zM501 223h1v1h-1zM299 224h1v1h-1zM361 224h3v1h-3zM502 224h1v1h-1zM298 225h1v1h-1zM364 225h2v1h-2zM503 225h1v1h-1zM297 226h1v1h-1zM366 226h2v1h-2zM504 226h1v1h-1zM295 227h2v1h-2zM368 227h2v1h-2zM505 227h1v1h-1zM294 228h1v1h-1zM370 228h2v1h-2zM506 228h1v1h-1zM293 229h1v1h-1zM372 229h2v1h-2zM507 229h1v1h-1zM292 230h1v1h-1zM374 230h2v1h-2zM508 230h1v1h-1zM291 231h1v1h-1zM376 231h1v1h-1zM509 231h1v1h-1zM290 232h1v1h-1zM377 232h1v1h-1zM510 232h1v1h-1zM290 233h1v1h-1zM378 233h2v1h-2zM511 233h1v1h-1zM289 234h1v1h-1zM380 234h1v1h-1zM512 234h1v1h-1zM288 235h1v1h-1zM381 235h2v1h-2zM513 235h1v1h-1zM287 236h1v1h-1zM383 236h1v1h-1zM514 236h1v1h-1zM287 237h1v1h-1zM384 237h2v1h-2zM515 237h1v1h-1zM286 238h1v1h-1zM386 238h1v1h-1zM516 238h1v1h-1zM286 239h1v1h-1zM387 239h1v1h-1zM516 239h1v1h-1zM285 240h1v1h-1zM388 240h2v1h-2zM517 240h1v1h-1zM285 241h1v1h-1zM390 241h1v1h-1zM518 241h1v1h-1zM284 242h1v1h-1zM391 242h1v1h-1zM519 242h1v1h-1zM284 243h1v1h-1zM392 243h2v1h-2zM520 243h1v1h-1zM221 244h16v1h-16zM283 244h1v1h-1zM394 244h1v1h-1zM521 244h1v1h-1zM215 245h6v1h-6zM237 245h5v1h-5zM283 245h1v1h-1zM395 245h1v1h-1zM522 245h1v1h-1zM213 246h2v1h-2zM242 246h4v1h-4zM282 246h1v1h-1zM396 246h1v1h-1zM523 246h1v1h-1zM210 247h3v1h-3zM246 247h3v1h-3zM282 247h1v1h-1zM397 247h1v1h-1zM523 247h1v1h-1zM208 248h2v1h-2zM249 248h4v1h-4zM282 248h1v1h-1zM398 248h1v1h-1zM524 248h1v1h-1zM206 249h2v1h-2zM253 249h3v1h-3zM282 249h1v1h-1zM399 249h2v1h-2zM525 249h1v1h-1zM204 250h2v1h-2zM256 250h3v1h-3zM281 250h1v1h-1zM401 250h1v1h-1zM526 250h1v1h-1zM202 251h2v1h-2zM259 251h2v1h-2zM281 251h1v1h-1zM402 251h1v1h-1zM526 251h1v1h-1zM201 252h1v1h-1zM261 252h3v1h-3zM281 252h1v1h-1zM403 252h1v1h-1zM527 252h1v1h-1zM199 253h2v1h-2zM264 253h2v1h-2zM280 253h1v1h-1zM404 253h1v1h-1zM528 253h1v1h-1zM198 254h1v1h-1zM266 254h2v1h-2zM280 254h1v1h-1zM405 254h1v1h-1zM529 254h1v1h-1zM197 255h1v1h-1zM268 255h2v1h-2zM280 255h1v1h-1zM406 255h1v1h-1zM529 255h1v1h-1zM195 256h2v1h-2zM270 256h1v1h-1zM280 256h1v1h-1zM407 256h1v1h-1zM530 256h1v1h-1zM194 257h1v1h-1zM271 257h2v1h-2zM279 257h1v1h-1zM408 257h1v1h-1zM531 257h1v1h-1zM193 258h1v1h-1zM273 258h2v1h-2zM279 258h1v1h-1zM409 258h1v1h-1zM531 258h1v1h-1zM193 259h1v1h-1zM275 259h1v1h-1zM279 259h1v1h-1zM409 259h1v1h-1zM532 259h1v1h-1zM192 260h1v1h-1zM279 260h1v1h-1zM410 260h1v1h-1zM532 260h1v1h-1zM191 261h1v1h-1zM279 261h1v1h-1zM411 261h1v1h-1zM533 261h1v1h-1zM190 262h1v1h-1zM278 262h1v1h-1zM412 262h1v1h-1zM534 262h1v1h-1zM190 263h1v1h-1zM278 263h1v1h-1zM413 263h1v1h-1zM534 263h1v1h-1zM189 264h1v1h-1zM278 264h1v1h-1zM414 264h1v1h-1zM535 264h1v1h-1zM188 265h1v1h-1zM278 265h1v1h-1zM415 265h1v1h-1zM536 265h1v1h-1zM188 266h1v1h-1zM278 266h1v1h-1zM416 266h1v1h-1zM536 266h1v1h-1zM187 267h1v1h-1zM278 267h1v1h-1zM416 267h1v1h-1zM537 267h1v1h-1zM186 268h1v1h-1zM278 268h1v1h-1zM417 268h1v1h-1zM537 268h1v1h-1zM185 269h1v1h-1zM278 269h1v1h-1zM418 269h1v1h-1zM538 269h1v1h-1zM185 270h1v1h-1zM277 270h1v1h-1zM419 270h1v1h-1zM539 270h1v1h-1zM184 271h1v1h-1zM277 271h1v1h-1zM420 271h1v1h-1zM539 271h1v1h-1zM184 272h1v1h-1zM277 272h1v1h-1zM421 272h1v1h-1zM540 272h1v1h-1zM183 273h1v1h-1zM277 273h1v1h-1zM421 273h1v1h-1zM540 273h1v1h-1zM183 274h1v1h-1zM277 274h1v1h-1zM422 274h1v1h-1zM541 274h1v1h-1zM183 275h1v1h-1zM277 275h1v1h-1zM423 275h1v1h-1zM541 275h1v1h-1zM182 276h1v1h-1zM277 276h1v1h-1zM424 276h1v1h-1zM542 276h1v1h-1zM182 277h1v1h-1zM277 277h1v1h-1zM425 277h1v1h-1zM543 277h1v1h-1zM182 278h1v1h-1zM277 278h1v1h-1zM425 278h1v1h-1zM543 278h1v1h-1zM181 279h1v1h-1zM277 279h1v1h-1zM426 279h1v1h-1zM544 279h1v1h-1zM181 280h1v1h-1zM277 280h1v1h-1zM427 280h1v1h-1zM544 280h1v1h-1zM181 281h1v1h-1zM277 281h1v1h-1zM428 281h1v1h-1zM545 281h1v1h-1zM181 282h1v1h-1zM277 282h1v1h-1zM428 282h1v1h-1zM545 282h1v1h-1zM180 283h1v1h-1zM277 283h1v1h-1zM429 283h1v1h-1zM546 283h1v1h-1zM180 284h1v1h-1zM277 284h1v1h-1zM430 284h1v1h-1zM546 284h1v1h-1zM180 285h1v1h-1zM277 285h1v1h-1zM431 285h1v1h-1zM547 285h1v1h-1zM180 286h1v1h-1zM277 286h1v1h-1zM431 286h1v1h-1zM547 286h1v1h-1zM180 287h1v1h-1zM277 287h1v1h-1zM432 287h1v1h-1zM548 287h1v1h-1zM179 288h1v1h-1zM277 288h1v1h-1zM433 288h1v1h-1zM548 288h1v1h-1zM179 289h1v1h-1zM277 289h1v1h-1zM433 289h1v1h-1zM549 289h1v1h-1zM179 290h1v1h-1zM277 290h1v1h-1zM434 290h1v1h-1zM549 290h1v1h-1zM179 291h1v1h-1zM277 291h1v1h-1zM434 291h1v1h-1zM550 291h1v1h-1zM179 292h1v1h-1zM277 292h1v1h-1zM435 292h1v1h-1zM550 292h1v1h-1zM179 293h1v1h-1zM278 293h1v1h-1zM436 293h1v1h-1zM551 293h1v1h-1zM179 294h1v1h-1zM278 294h1v1h-1zM436 294h1v1h-1zM551 294h1v1h-1zM179 295h1v1h-1zM278 295h1v1h-1zM437 295h1v1h-1zM552 295h1v1h-1zM178 296h1v1h-1zM278 296h1v1h-1zM438 296h1v1h-1zM552 296h1v1h-1zM178 297h1v1h-1zM278 297h1v1h-1zM438 297h1v1h-1zM552 297h1v1h-1zM178 298h1v1h-1zM278 298h1v1h-1zM439 298h1v1h-1zM553 298h1v1h-1zM178 299h1v1h-1zM278 299h1v1h-1zM439 299h1v1h-1zM553 299h1v1h-1zM178 300h1v1h-1zM278 300h1v1h-1zM440 300h1v1h-1zM554 300h1v1h-1zM178 301h1v1h-1zM278 301h1v1h-1zM441 301h1v1h-1zM554 301h1v1h-1zM178 302h1v1h-1zM279 302h1v1h-1zM441 302h1v1h-1zM554 302h1v1h-1zM178 303h1v1h-1zM279 303h1v1h-1zM442 303h1v1h-1zM555 303h1v1h-1zM178 304h1v1h-1zM279 304h1v1h-1zM442 304h1v1h-1zM555 304h1v1h-1zM178 305h1v1h-1zM279 305h1v1h-1zM443 305h1v1h-1zM556 305h1v1h-1zM178 306h1v1h-1zM280 306h1v1h-1zM444 306h1v1h-1zM556 306h1v1h-1zM178 307h1v1h-1zM280 307h1v1h-1zM444 307h1v1h-1zM556 307h1v1h-1zM178 308h1v1h-1zM280 308h1v1h-1zM445 308h1v1h-1zM557 308h1v1h-1zM178 309h1v1h-1zM280 309h1v1h-1zM446 309h1v1h-1zM557 309h1v1h-1zM178 310h1v1h-1zM281 310h1v1h-1zM446 310h1v1h-1zM558 310h1v1h-1zM178 311h1v1h-1zM281 311h1v1h-1zM447 311h1v1h-1zM558 311h1v1h-1zM178 312h1v1h-1zM281 312h1v1h-1zM447 312h1v1h-1zM558 312h1v1h-1zM178 313h1v1h-1zM281 313h1v1h-1zM448 313h1v1h-1zM559 313h1v1h-1zM178 314h1v1h-1zM282 314h1v1h-1zM448 314h1v1h-1zM559 314h1v1h-1zM178 315h1v1h-1zM282 315h1v1h-1zM449 315h1v1h-1zM559 315h1v1h-1zM178 316h1v1h-1zM282 316h1v1h-1zM449 316h1v1h-1zM560 316h1v1h-1zM178 317h1v1h-1zM283 317h1v1h-1zM450 317h1v1h-1zM560 317h1v1h-1zM178 318h1v1h-1zM283 318h1v1h-1zM450 318h1v1h-1zM561 318h1v1h-1zM179 319h1v1h-1zM283 319h1v1h-1zM451 319h1v1h-1zM561 319h1v1h-1zM179 320h1v1h-1zM283 320h1v1h-1zM451 320h1v1h-1zM561 320h1v1h-1zM179 321h1v1h-1zM284 321h1v1h-1zM451 321h1v1h-1zM562 321h1v1h-1zM179 322h1v1h-1zM284 322h1v1h-1zM452 322h1v1h-1zM562 322h1v1h-1zM179 323h1v1h-1zM284 323h1v1h-1zM452 323h1v1h-1zM562 323h1v1h-1zM179 324h1v1h-1zM285 324h1v1h-1zM453 324h1v1h-1zM563 324h1v1h-1zM179 325h1v1h-1zM285 325h1v1h-1zM453 325h1v1h-1zM563 325h1v1h-1zM179 326h1v1h-1zM285 326h1v1h-1zM454 326h1v1h-1zM563 326h1v1h-1zM179 327h1v1h-1zM286 327h1v1h-1zM454 327h1v1h-1zM564 327h1v1h-1zM180 328h1v1h-1zM286 328h1v1h-1zM454 328h1v1h-1zM564 328h1v1h-1zM180 329h1v1h-1zM286 329h1v1h-1zM455 329h1v1h-1zM564 329h1v1h-1zM180 330h1v1h-1zM287 330h1v1h-1zM455 330h1v1h-1zM564 330h1v1h-1zM180 331h1v1h-1zM287 331h1v1h-1zM456 331h1v1h-1zM565 331h1v1h-1zM181 332h1v1h-1zM288 332h1v1h-1zM456 332h1v1h-1zM565 332h1v1h-1zM181 333h1v1h-1zM288 333h1v1h-1zM456 333h1v1h-1zM565 333h1v1h-1zM181 334h1v1h-1zM288 334h1v1h-1zM457 334h1v1h-1zM565 334h1v1h-1zM181 335h1v1h-1zM289 335h1v1h-1zM457 335h1v1h-1zM566 335h1v1h-1zM182 336h1v1h-1zM289 336h1v1h-1zM458 336h1v1h-1zM566 336h1v1h-1zM182 337h1v1h-1zM289 337h1v1h-1zM458 337h1v1h-1zM566 337h1v1h-1zM182 338h1v1h-1zM290 338h1v1h-1zM458 338h1v1h-1zM566 338h1v1h-1zM182 339h1v1h-1zM290 339h1v1h-1zM459 339h1v1h-1zM567 339h1v1h-1zM182 340h1v1h-1zM291 340h1v1h-1zM459 340h1v1h-1zM567 340h1v1h-1zM183 341h1v1h-1zM291 341h1v1h-1zM460 341h1v1h-1zM567 341h1v1h-1zM183 342h1v1h-1zM292 342h1v1h-1zM460 342h1v1h-1zM567 342h1v1h-1zM183 343h1v1h-1zM292 343h1v1h-1zM460 343h1v1h-1zM567 343h1v1h-1zM183 344h1v1h-1zM293 344h1v1h-1zM461 344h1v1h-1zM568 344h1v1h-1zM184 345h1v1h-1zM293 345h1v1h-1zM461 345h1v1h-1zM568 345h1v1h-1zM184 346h1v1h-1zM294 346h1v1h-1zM461 346h1v1h-1zM568 346h1v1h-1zM184 347h1v1h-1zM294 347h1v1h-1zM462 347h1v1h-1zM568 347h1v1h-1zM184 348h1v1h-1zM295 348h1v1h-1zM462 348h1v1h-1zM568 348h1v1h-1zM185 349h1v1h-1zM295 349h1v1h-1zM463 349h1v1h-1zM568 349h1v1h-1zM185 350h1v1h-1zM296 350h1v1h-1zM463 350h1v1h-1zM568 350h1v1h-1zM185 351h1v1h-1zM296 351h1v1h-1zM463 351h1v1h-1zM568 351h1v1h-1zM185 352h1v1h-1zM297 352h1v1h-1zM464 352h1v1h-1zM569 352h1v1h-1zM186 353h1v1h-1zM297 353h1v1h-1zM464 353h1v1h-1zM569 353h1v1h-1zM186 354h1v1h-1zM298 354h1v1h-1zM464 354h1v1h-1zM569 354h1v1h-1zM186 355h1v1h-1zM298 355h1v1h-1zM465 355h1v1h-1zM569 355h1v1h-1zM187 356h1v1h-1zM299 356h1v1h-1zM465 356h1v1h-1zM569 356h1v1h-1zM187 357h1v1h-1zM299 357h1v1h-1zM465 357h1v1h-1zM569 357h1v1h-1zM188 358h1v1h-1zM300 358h1v1h-1zM465 358h1v1h-1zM569 358h1v1h-1zM188 359h1v1h-1zM300 359h1v1h-1zM466 359h1v1h-1zM570 359h1v1h-1zM188 360h1v1h-1zM301 360h1v1h-1zM466 360h1v1h-1zM570 360h1v1h-1zM189 361h1v1h-1zM301 361h1v1h-1zM466 361h1v1h-1zM570 361h1v1h-1zM189 362h1v1h-1zM302 362h1v1h-1zM466 362h1v1h-1zM570 362h1v1h-1zM189 363h1v1h-1zM302 363h1v1h-1zM466 363h1v1h-1zM570 363h1v1h-1zM190 364h1v1h-1zM303 364h1v1h-1zM467 364h1v1h-1zM570 364h1v1h-1zM190 365h1v1h-1zM303 365h1v1h-1zM467 365h1v1h-1zM570 365h1v1h-1zM190 366h1v1h-1zM304 366h1v1h-1zM467 366h1v1h-1zM571 366h1v1h-1zM191 367h1v1h-1zM305 367h1v1h-1zM467 367h1v1h-1zM571 367h1v1h-1zM191 368h1v1h-1zM305 368h1v1h-1zM467 368h1v1h-1zM571 368h1v1h-1zM192 369h1v1h-1zM306 369h1v1h-1zM468 369h1v1h-1zM571 369h1v1h-1zM192 370h1v1h-1zM306 370h1v1h-1zM468 370h1v1h-1zM571 370h1v1h-1zM193 371h1v1h-1zM307 371h1v1h-1zM468 371h1v1h-1zM571 371h1v1h-1zM193 372h1v1h-1zM307 372h1v1h-1zM468 372h1v1h-1zM571 372h1v1h-1zM193 373h1v1h-1zM308 373h1v1h-1zM468 373h1v1h-1zM571 373h1v1h-1zM194 374h1v1h-1zM309 374h1v1h-1zM469 374h1v1h-1zM571 374h1v1h-1zM194 375h1v1h-1zM309 375h1v1h-1zM469 375h1v1h-1zM571 375h1v1h-1zM195 376h1v1h-1zM310 376h1v1h-1zM469 376h1v1h-1zM571 376h1v1h-1zM195 377h1v1h-1zM310 377h1v1h-1zM469 377h1v1h-1zM571 377h1v1h-1zM196 378h1v1h-1zM311 378h1v1h-1zM469 378h1v1h-1zM571 378h1v1h-1zM196 379h1v1h-1zM311 379h1v1h-1zM470 379h1v1h-1zM571 379h1v1h-1zM197 380h1v1h-1zM312 380h1v1h-1zM470 380h1v1h-1zM571 380h1v1h-1zM197 381h1v1h-1zM313 381h1v1h-1zM470 381h1v1h-1zM571 381h1v1h-1zM198 382h1v1h-1zM314 382h1v1h-1zM470 382h1v1h-1zM571 382h1v1h-1zM198 383h1v1h-1zM314 383h1v1h-1zM470 383h1v1h-1zM571 383h1v1h-1zM199 384h1v1h-1zM315 384h1v1h-1zM471 384h1v1h-1zM571 384h1v1h-1zM199 385h1v1h-1zM316 385h1v1h-1zM471 385h1v1h-1zM571 385h1v1h-1zM200 386h1v1h-1zM317 386h1v1h-1zM471 386h1v1h-1zM571 386h1v1h-1zM201 387h1v1h-1zM317 387h1v1h-1zM471 387h1v1h-1zM571 387h1v1h-1zM201 388h1v1h-1zM318 388h1v1h-1zM471 388h1v1h-1zM571 388h1v1h-1zM202 389h1v1h-1zM319 389h1v1h-1zM471 389h1v1h-1zM571 389h1v1h-1zM202 390h1v1h-1zM320 390h1v1h-1zM471 390h1v1h-1zM571 390h1v1h-1zM203 391h1v1h-1zM320 391h1v1h-1zM471 391h1v1h-1zM570 391h1v1h-1zM203 392h1v1h-1zM321 392h1v1h-1zM471 392h1v1h-1zM570 392h1v1h-1zM204 393h1v1h-1zM322 393h1v1h-1zM472 393h1v1h-1zM570 393h1v1h-1zM205 394h1v1h-1zM323 394h1v1h-1zM472 394h1v1h-1zM570 394h1v1h-1zM205 395h1v1h-1zM324 395h1v1h-1zM472 395h1v1h-1zM570 395h1v1h-1zM206 396h1v1h-1zM324 396h1v1h-1zM472 396h1v1h-1zM570 396h1v1h-1zM206 397h1v1h-1zM325 397h1v1h-1zM472 397h1v1h-1zM570 397h1v1h-1zM207 398h1v1h-1zM326 398h1v1h-1zM472 398h1v1h-1zM570 398h1v1h-1zM208 399h1v1h-1zM327 399h1v1h-1zM472 399h1v1h-1zM570 399h1v1h-1zM208 400h1v1h-1zM327 400h1v1h-1zM472 400h1v1h-1zM570 400h1v1h-1zM209 401h1v1h-1zM328 401h1v1h-1zM472 401h1v1h-1zM569 401h1v1h-1zM210 402h1v1h-1zM329 402h1v1h-1zM472 402h1v1h-1zM569 402h1v1h-1zM210 403h1v1h-1zM330 403h1v1h-1zM472 403h1v1h-1zM569 403h1v1h-1zM211 404h1v1h-1zM330 404h1v1h-1zM472 404h1v1h-1zM569 404h1v1h-1zM211 405h1v1h-1zM331 405h1v1h-1zM472 405h1v1h-1zM569 405h1v1h-1zM212 406h1v1h-1zM332 406h1v1h-1zM472 406h1v1h-1zM569 406h1v1h-1zM213 407h1v1h-1zM333 407h1v1h-1zM472 407h1v1h-1zM568 407h1v1h-1zM213 408h1v1h-1zM334 408h1v1h-1zM472 408h1v1h-1zM568 408h1v1h-1zM214 409h1v1h-1zM335 409h1v1h-1zM472 409h1v1h-1zM568 409h1v1h-1zM215 410h1v1h-1zM336 410h1v1h-1zM472 410h1v1h-1zM568 410h1v1h-1zM215 411h1v1h-1zM337 411h1v1h-1zM472 411h1v1h-1zM568 411h1v1h-1zM216 412h1v1h-1zM338 412h1v1h-1zM472 412h1v1h-1zM568 412h1v1h-1zM217 413h1v1h-1zM338 413h1v1h-1zM472 413h1v1h-1zM567 413h1v1h-1zM217 414h1v1h-1zM339 414h1v1h-1zM472 414h1v1h-1zM567 414h1v1h-1zM218 415h1v1h-1zM340 415h1v1h-1zM472 415h1v1h-1zM567 415h1v1h-1zM218 416h1v1h-1zM341 416h1v1h-1zM472 416h1v1h-1zM567 416h1v1h-1zM219 417h1v1h-1zM342 417h1v1h-1zM472 417h1v1h-1zM566 417h1v1h-1zM220 418h1v1h-1zM343 418h1v1h-1zM472 418h1v1h-1zM566 418h1v1h-1zM220 419h1v1h-1zM344 419h1v1h-1zM472 419h1v1h-1zM566 419h1v1h-1zM221 420h1v1h-1zM345 420h1v1h-1zM472 420h1v1h-1zM566 420h1v1h-1zM222 421h1v1h-1zM346 421h1v1h-1zM472 421h1v1h-1zM565 421h1v1h-1zM223 422h1v1h-1zM347 422h1v1h-1zM471 422h1v1h-1zM565 422h1v1h-1zM224 423h1v1h-1zM348 423h1v1h-1zM471 423h1v1h-1zM565 423h1v1h-1zM224 424h1v1h-1zM349 424h1v1h-1zM471 424h1v1h-1zM564 424h1v1h-1zM225 425h1v1h-1zM350 425h1v1h-1zM471 425h1v1h-1zM564 425h1v1h-1zM226 426h1v1h-1zM351 426h1v1h-1zM471 426h1v1h-1zM563 426h1v1h-1zM227 427h1v1h-1zM352 427h1v1h-1zM471 427h1v1h-1zM563 427h1v1h-1zM228 428h1v1h-1zM353 428h1v1h-1zM471 428h1v1h-1zM563 428h1v1h-1zM229 429h1v1h-1zM354 429h1v1h-1zM471 429h1v1h-1zM562 429h1v1h-1zM229 430h1v1h-1zM355 430h1v1h-1zM471 430h1v1h-1zM562 430h1v1h-1zM230 431h1v1h-1zM356 431h1v1h-1zM471 431h1v1h-1zM561 431h1v1h-1zM231 432h1v1h-1zM357 432h1v1h-1zM470 432h1v1h-1zM561 432h1v1h-1zM232 433h1v1h-1zM358 433h1v1h-1zM470 433h1v1h-1zM560 433h1v1h-1zM233 434h1v1h-1zM359 434h1v1h-1zM470 434h1v1h-1zM560 434h1v1h-1zM234 435h1v1h-1zM360 435h1v1h-1zM470 435h1v1h-1zM560 435h1v1h-1zM234 436h1v1h-1zM361 436h2v1h-2zM470 436h1v1h-1zM559 436h1v1h-1zM235 437h1v1h-1zM363 437h1v1h-1zM470 437h1v1h-1zM559 437h1v1h-1zM236 438h1v1h-1zM364 438h1v1h-1zM469 438h1v1h-1zM558 438h1v1h-1zM237 439h1v1h-1zM365 439h1v1h-1zM469 439h1v1h-1zM558 439h1v1h-1zM238 440h1v1h-1zM366 440h1v1h-1zM469 440h1v1h-1zM557 440h1v1h-1zM239 441h1v1h-1zM367 441h1v1h-1zM469 441h1v1h-1zM557 441h1v1h-1zM239 442h1v1h-1zM368 442h2v1h-2zM469 442h1v1h-1zM556 442h1v1h-1zM240 443h1v1h-1zM370 443h1v1h-1zM468 443h1v1h-1zM556 443h1v1h-1zM241 444h1v1h-1zM371 444h2v1h-2zM468 444h1v1h-1zM555 444h1v1h-1zM242 445h1v1h-1zM373 445h1v1h-1zM468 445h1v1h-1zM555 445h1v1h-1zM243 446h1v1h-1zM374 446h1v1h-1zM467 446h1v1h-1zM554 446h1v1h-1zM244 447h1v1h-1zM375 447h2v1h-2zM467 447h1v1h-1zM553 447h1v1h-1zM245 448h1v1h-1zM377 448h1v1h-1zM467 448h1v1h-1zM553 448h1v1h-1zM246 449h1v1h-1zM378 449h2v1h-2zM466 449h1v1h-1zM552 449h1v1h-1zM247 450h1v1h-1zM380 450h1v1h-1zM466 450h1v1h-1zM551 450h1v1h-1zM248 451h1v1h-1zM381 451h2v1h-2zM466 451h1v1h-1zM550 451h1v1h-1zM249 452h1v1h-1zM383 452h1v1h-1zM465 452h1v1h-1zM550 452h1v1h-1zM250 453h1v1h-1zM384 453h2v1h-2zM465 453h1v1h-1zM549 453h1v1h-1zM251 454h1v1h-1zM386 454h1v1h-1zM465 454h1v1h-1zM548 454h1v1h-1zM252 455h1v1h-1zM387 455h1v1h-1zM464 455h1v1h-1zM547 455h1v1h-1zM253 456h1v1h-1zM388 456h2v1h-2zM464 456h1v1h-1zM546 456h1v1h-1zM254 457h1v1h-1zM390 457h1v1h-1zM463 457h1v1h-1zM545 457h1v1h-1zM255 458h1v1h-1zM391 458h2v1h-2zM463 458h1v1h-1zM544 458h1v1h-1zM256 459h1v1h-1zM393 459h1v1h-1zM462 459h1v1h-1zM544 459h1v1h-1zM257 460h2v1h-2zM394 460h2v1h-2zM462 460h1v1h-1zM543 460h1v1h-1zM259 461h1v1h-1zM396 461h2v1h-2zM461 461h1v1h-1zM542 461h1v1h-1zM260 462h1v1h-1zM398 462h2v1h-2zM461 462h1v1h-1zM541 462h1v1h-1zM261 463h1v1h-1zM400 463h1v1h-1zM460 463h1v1h-1zM540 463h1v1h-1zM262 464h1v1h-1zM401 464h2v1h-2zM460 464h1v1h-1zM539 464h1v1h-1zM263 465h2v1h-2zM403 465h2v1h-2zM459 465h1v1h-1zM537 465h2v1h-2zM265 466h1v1h-1zM405 466h2v1h-2zM459 466h1v1h-1zM536 466h1v1h-1zM266 467h1v1h-1zM407 467h2v1h-2zM458 467h1v1h-1zM535 467h1v1h-1zM267 468h1v1h-1zM409 468h2v1h-2zM458 468h1v1h-1zM533 468h2v1h-2zM268 469h2v1h-2zM411 469h2v1h-2zM457 469h1v1h-1zM532 469h1v1h-1zM270 470h1v1h-1zM413 470h2v1h-2zM457 470h1v1h-1zM531 470h1v1h-1zM271 471h1v1h-1zM415 471h2v1h-2zM456 471h1v1h-1zM529 471h2v1h-2zM272 472h2v1h-2zM417 472h2v1h-2zM456 472h1v1h-1zM527 472h2v1h-2zM274 473h1v1h-1zM419 473h3v1h-3zM455 473h1v1h-1zM526 473h1v1h-1zM275 474h1v1h-1zM422 474h3v1h-3zM455 474h1v1h-1zM524 474h2v1h-2zM276 475h2v1h-2zM425 475h2v1h-2zM454 475h1v1h-1zM522 475h2v1h-2zM278 476h1v1h-1zM427 476h3v1h-3zM453 476h1v1h-1zM520 476h2v1h-2zM279 477h1v1h-1zM430 477h3v1h-3zM452 477h1v1h-1zM517 477h3v1h-3zM280 478h2v1h-2zM433 478h3v1h-3zM452 478h1v1h-1zM515 478h2v1h-2zM282 479h1v1h-1zM436 479h4v1h-4zM451 479h1v1h-1zM512 479h3v1h-3zM283 480h2v1h-2zM440 480h3v1h-3zM450 480h1v1h-1zM509 480h3v1h-3zM285 481h1v1h-1zM443 481h4v1h-4zM449 481h1v1h-1zM506 481h3v1h-3zM286 482h1v1h-1zM447 482h4v1h-4zM504 482h2v1h-2zM287 483h2v1h-2zM448 483h1v1h-1zM451 483h4v1h-4zM501 483h3v1h-3zM289 484h1v1h-1zM447 484h1v1h-1zM455 484h4v1h-4zM494 484h7v1h-7zM290 485h2v1h-2zM446 485h1v1h-1zM459 485h9v1h-9zM481 485h13v1h-13zM292 486h1v1h-1zM445 486h1v1h-1zM468 486h13v1h-13zM293 487h2v1h-2zM444 487h1v1h-1zM295 488h2v1h-2zM443 488h1v1h-1zM297 489h1v1h-1zM442 489h1v1h-1zM298 490h2v1h-2zM441 490h1v1h-1zM300 491h1v1h-1zM440 491h1v1h-1zM301 492h2v1h-2zM439 492h1v1h-1zM303 493h2v1h-2zM438 493h1v1h-1zM305 494h1v1h-1zM436 494h2v1h-2zM306 495h2v1h-2zM435 495h1v1h-1zM308 496h2v1h-2zM434 496h1v1h-1zM310 497h2v1h-2zM432 497h2v1h-2zM312 498h2v1h-2zM431 498h1v1h-1zM314 499h2v1h-2zM430 499h1v1h-1zM316 500h2v1h-2zM428 500h2v1h-2zM318 501h3v1h-3zM426 501h2v1h-2zM321 502h3v1h-3zM425 502h1v1h-1zM324 503h2v1h-2zM423 503h2v1h-2zM326 504h3v1h-3zM421 504h2v1h-2zM329 505h3v1h-3zM420 505h1v1h-1zM332 506h3v1h-3zM418 506h2v1h-2zM335 507h3v1h-3zM416 507h2v1h-2zM338 508h4v1h-4zM414 508h2v1h-2zM342 509h3v1h-3zM412 509h2v1h-2zM345 510h4v1h-4zM408 510h4v1h-4zM349 511h4v1h-4zM402 511h6v1h-6zM353 512h5v1h-5zM396 512h6v1h-6zM358 513h9v1h-9zM390 513h6v1h-6zM367 514h23v1h-23z" fill="#0000ff"/>
<g transform="translate(77.52,212.90) scale(1.000,1)"><path d="M4.30,-6 h1.15 v10 h-1.15 z M4.30,-6 L4.30,-4.8 L1.20,-3.1 L1.20,-4.1 Z" fill="#000"/></g>
<g transform="translate(66.12,277.29) scale(0.960,1)"><text class="t" x="0.00" y="0" dominant-baseline="middle">0</text><text class="t" x="7.78" y="0" dominant-baseline="middle">.</text><text class="t" x="11.68" y="0" dominant-baseline="middle">5</text></g>
<g transform="translate(77.91,342.27) scale(0.950,1)"><text class="t" x="0.00" y="0" dominant-baseline="middle">0</text></g>
<g transform="translate(63.11,405.96) scale(0.920,1)"><text class="t" x="0.00" y="0" dominant-baseline="middle">-</text><text class="t" x="4.66" y="0" dominant-baseline="middle">0</text><text class="t" x="12.45" y="0" dominant-baseline="middle">.</text><text class="t" x="16.34" y="0" dominant-baseline="middle">5</text></g>
<g transform="translate(73.48,471.15) scale(0.950,1)"><text class="t" x="0.00" y="0" dominant-baseline="middle">-</text><path d="M8.96,-6 h1.15 v10 h-1.15 z M8.96,-6 L8.96,-4.8 L5.86,-3.1 L5.86,-4.1 Z" fill="#000"/></g>
<g transform="translate(76.92,486.85) scale(1.000,1)"><path d="M4.30,-6 h1.15 v10 h-1.15 z M4.30,-6 L4.30,-4.8 L1.20,-3.1 L1.20,-4.1 Z" fill="#000"/></g>
<g transform="translate(125.17,517.44) scale(0.960,1)"><text class="t" x="0.00" y="0" dominant-baseline="middle">0</text><text class="t" x="7.78" y="0" dominant-baseline="middle">.</text><text class="t" x="11.68" y="0" dominant-baseline="middle">5</text></g>
<g transform="translate(197.91,547.22) scale(0.950,1)"><text class="t" x="0.00" y="0" dominant-baseline="middle">0</text></g>
<g transform="translate(243.86,576.41) scale(0.920,1)"><text class="t" x="0.00" y="0" dominant-baseline="middle">-</text><text class="t" x="4.66" y="0" dominant-baseline="middle">0</text><text class="t" x="12.45" y="0" dominant-baseline="middle">.</text><text class="t" x="16.34" y="0" dominant-baseline="middle">5</text></g>
<g transform="translate(313.98,606.30) scale(0.950,1)"><text class="t" x="0.00" y="0" dominant-baseline="middle">-</text><path d="M8.96,-6 h1.15 v10 h-1.15 z M8.96,-6 L8.96,-4.8 L5.86,-3.1 L5.86,-4.1 Z" fill="#000"/></g>
<g transform="translate(349.40,608.60) scale(0.900,1)"><text class="t" x="0.00" y="0" dominant-baseline="middle">-</text><path d="M8.96,-6 h1.15 v10 h-1.15 z M8.96,-6 L8.96,-4.8 L5.86,-3.1 L5.86,-4.1 Z" fill="#000"/><text class="t" x="12.45" y="0" dominant-baseline="middle">0</text></g>
<g transform="translate(427.20,585.71) scale(1.000,1)"><text class="t" x="0.00" y="0" dominant-baseline="middle">-</text><text class="t" x="4.66" y="0" dominant-baseline="middle">5</text></g>
<g transform="translate(506.30,562.62) scale(0.950,1)"><text class="t" x="0.00" y="0" dominant-baseline="middle">0</text></g>
<g transform="translate(584.30,539.84) scale(1.000,1)"><text class="t" x="0.00" y="0" dominant-baseline="middle">5</text></g>
<g transform="translate(662.90,517.15) scale(0.960,1)"><path d="M4.30,-6 h1.15 v10 h-1.15 z M4.30,-6 L4.30,-4.8 L1.20,-3.1 L1.20,-4.1 Z" fill="#000"/><text class="t" x="7.78" y="0" dominant-baseline="middle">0</text></g>
<text x="374.5" y="115" text-anchor="middle" style="font-size:13.25px">Graph of x, sin(x), cos(x)</text>
<text x="194" y="616" text-anchor="middle">sin(x)</text>
<text x="485" y="622" text-anchor="middle">x</text>
<text transform="translate(51.5,347) rotate(-90)" text-anchor="middle">Cos(x)</text>
</svg>
<!-- size grip -->
<svg class="abs" style="left:0;top:0" width="725" height="685" shape-rendering="crispEdges"><rect x="711" y="684" width="1" height="1" fill="#fff"/><rect x="712" y="683" width="1" height="1" fill="#fff"/><rect x="713" y="682" width="1" height="1" fill="#fff"/><rect x="714" y="681" width="1" height="1" fill="#fff"/><rect x="715" y="680" width="1" height="1" fill="#fff"/><rect x="716" y="679" width="1" height="1" fill="#fff"/><rect x="717" y="678" width="1" height="1" fill="#fff"/><rect x="718" y="677" width="1" height="1" fill="#fff"/><rect x="719" y="676" width="1" height="1" fill="#fff"/><rect x="720" y="675" width="1" height="1" fill="#fff"/><rect x="721" y="674" width="1" height="1" fill="#fff"/><rect x="712" y="684" width="1" height="1" fill="#808080"/><rect x="713" y="683" width="1" height="1" fill="#808080"/><rect x="714" y="682" width="1" height="1" fill="#808080"/><rect x="715" y="681" width="1" height="1" fill="#808080"/><rect x="716" y="680" width="1" height="1" fill="#808080"/><rect x="717" y="679" width="1" height="1" fill="#808080"/><rect x="718" y="678" width="1" height="1" fill="#808080"/><rect x="719" y="677" width="1" height="1" fill="#808080"/><rect x="720" y="676" width="1" height="1" fill="#808080"/><rect x="721" y="675" width="1" height="1" fill="#808080"/><rect x="713" y="684" width="1" height="1" fill="#808080"/><rect x="714" y="683" width="1" height="1" fill="#808080"/><rect x="715" y="682" width="1" height="1" fill="#808080"/><rect x="716" y="681" width="1" height="1" fill="#808080"/><rect x="717" y="680" width="1" height="1" fill="#808080"/><rect x="718" y="679" width="1" height="1" fill="#808080"/><rect x="719" y="678" width="1" height="1" fill="#808080"/><rect x="720" y="677" width="1" height="1" fill="#808080"/><rect x="721" y="676" width="1" height="1" fill="#808080"/><rect x="715" y="684" width="1" height="1" fill="#fff"/><rect x="716" y="683" width="1" height="1" fill="#fff"/><rect x="717" y="682" width="1" height="1" fill="#fff"/><rect x="718" y="681" width="1" height="1" fill="#fff"/><rect x="719" y="680" width="1" height="1" fill="#fff"/><rect x="720" y="679" width="1" height="1" fill="#fff"/><rect x="721" y="678" width="1" height="1" fill="#fff"/><rect x="716" y="684" width="1" height="1" fill="#808080"/><rect x="717" y="683" width="1" height="1" fill="#808080"/><rect x="718" y="682" width="1" height="1" fill="#808080"/><rect x="719" y="681" width="1" height="1" fill="#808080"/><rect x="720" y="680" width="1" height="1" fill="#808080"/><rect x="721" y="679" width="1" height="1" fill="#808080"/><rect x="717" y="684" width="1" height="1" fill="#808080"/><rect x="718" y="683" width="1" height="1" fill="#808080"/><rect x="719" y="682" width="1" height="1" fill="#808080"/><rect x="720" y="681" width="1" height="1" fill="#808080"/><rect x="721" y="680" width="1" height="1" fill="#808080"/><rect x="719" y="684" width="1" height="1" fill="#fff"/><rect x="720" y="683" width="1" height="1" fill="#fff"/><rect x="721" y="682" width="1" height="1" fill="#fff"/><rect x="720" y="684" width="1" height="1" fill="#808080"/><rect x="721" y="683" width="1" height="1" fill="#808080"/><rect x="721" y="684" width="1" height="1" fill="#808080"/></svg>
</body></html>
